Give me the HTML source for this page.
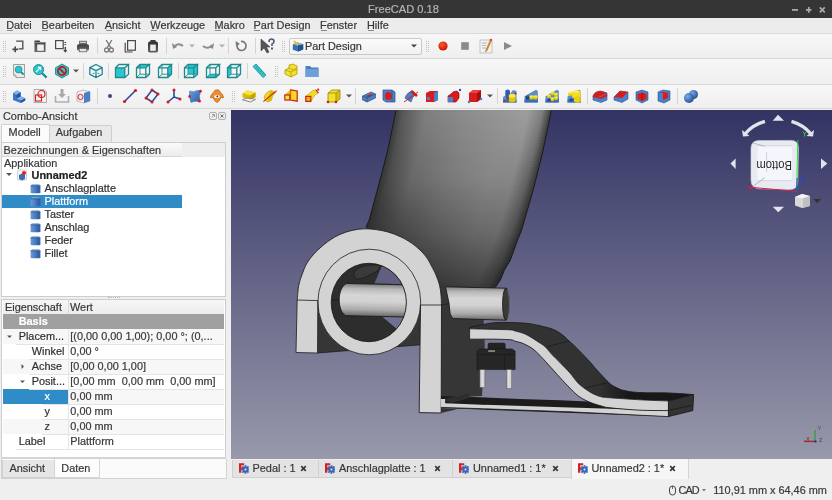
<!DOCTYPE html><html><head><meta charset="utf-8"><title>FreeCAD</title><style>
html,body{margin:0;padding:0}
body{width:832px;height:500px;overflow:hidden;position:relative;background:#efefef;
font-family:"Liberation Sans",sans-serif;font-size:10.90px;color:#383838}
.t{position:absolute;line-height:12px;white-space:pre}
svg{display:block}
.t{-webkit-font-smoothing:antialiased;transform:translateZ(0);-webkit-text-stroke:0.2px currentColor}
</style></head><body><div style="position:absolute;left:0;top:0;width:832px;height:18px;background:#353535"></div>
<div class="t" style="left:368.00px;top:2.72px;color:#b4b4b4;font-size:11.1px">FreeCAD 0.18</div>
<svg style="position:absolute;left:780px;top:0" width="52" height="18"><rect x="12" y="9" width="6" height="1.8" fill="#a8a8a8"/><rect x="26" y="9" width="5.5" height="1.8" fill="#a8a8a8"/><rect x="27.9" y="7" width="1.8" height="5.8" fill="#a8a8a8"/><path d="M39.8 7.3 L44.8 12.3 M44.8 7.3 L39.8 12.3" stroke="#a8a8a8" stroke-width="1.7"/></svg>
<div style="position:absolute;left:0;top:18px;width:832px;height:15px;background:#ececec;border-bottom:1px solid #d9d9d9"></div>
<div class="t" style="left:6.20px;top:19.22px;color:#383838">Datei</div>
<div style="position:absolute;left:7.0px;top:30.2px;width:6px;height:1px;background:#8a8a8a"></div>
<div class="t" style="left:41.60px;top:19.22px;color:#383838">Bearbeiten</div>
<div style="position:absolute;left:42.4px;top:30.2px;width:6px;height:1px;background:#8a8a8a"></div>
<div class="t" style="left:104.80px;top:19.22px;color:#383838">Ansicht</div>
<div style="position:absolute;left:105.6px;top:30.2px;width:6px;height:1px;background:#8a8a8a"></div>
<div class="t" style="left:150.30px;top:19.22px;color:#383838">Werkzeuge</div>
<div style="position:absolute;left:151.1px;top:30.2px;width:6px;height:1px;background:#8a8a8a"></div>
<div class="t" style="left:214.50px;top:19.22px;color:#383838">Makro</div>
<div style="position:absolute;left:215.3px;top:30.2px;width:6px;height:1px;background:#8a8a8a"></div>
<div class="t" style="left:253.60px;top:19.22px;color:#383838">Part Design</div>
<div style="position:absolute;left:254.4px;top:30.2px;width:6px;height:1px;background:#8a8a8a"></div>
<div class="t" style="left:320.10px;top:19.22px;color:#383838">Fenster</div>
<div style="position:absolute;left:320.9px;top:30.2px;width:6px;height:1px;background:#8a8a8a"></div>
<div class="t" style="left:367.00px;top:19.22px;color:#383838">Hilfe</div>
<div style="position:absolute;left:367.8px;top:30.2px;width:6px;height:1px;background:#8a8a8a"></div>
<div style="position:absolute;left:0;top:34px;width:832px;height:24px;background:linear-gradient(#f7f7f7,#efefef);border-bottom:1px solid #d6d6d6"></div>
<div style="position:absolute;left:0;top:59px;width:832px;height:25px;background:linear-gradient(#f7f7f7,#efefef);border-bottom:1px solid #d6d6d6"></div>
<div style="position:absolute;left:0;top:85px;width:832px;height:23px;background:linear-gradient(#f7f7f7,#efefef);border-bottom:1px solid #d6d6d6"></div>
<svg style="position:absolute;left:3px;top:38px" width="5" height="16"><rect x="0" y="3" width="1" height="1" fill="#c2c2c2"/><rect x="2" y="3" width="1" height="1" fill="#c2c2c2"/><rect x="0" y="5" width="1" height="1" fill="#c2c2c2"/><rect x="2" y="5" width="1" height="1" fill="#c2c2c2"/><rect x="0" y="7" width="1" height="1" fill="#c2c2c2"/><rect x="2" y="7" width="1" height="1" fill="#c2c2c2"/><rect x="0" y="9" width="1" height="1" fill="#c2c2c2"/><rect x="2" y="9" width="1" height="1" fill="#c2c2c2"/><rect x="0" y="11" width="1" height="1" fill="#c2c2c2"/><rect x="2" y="11" width="1" height="1" fill="#c2c2c2"/><rect x="0" y="13" width="1" height="1" fill="#c2c2c2"/><rect x="2" y="13" width="1" height="1" fill="#c2c2c2"/></svg>
<svg style="position:absolute;left:10.0px;top:38.0px" width="16" height="16" viewBox="0 0 16 16"><path d="M6.2 3.2 H12.8 V10.8 H8.6" fill="none" stroke="#4a4a4a" stroke-width="1.3"/><path d="M5.2 8.6 V14.2 M2.4 11.4 H8" stroke="#4a4a4a" stroke-width="1.6"/></svg>
<svg style="position:absolute;left:32.0px;top:38.0px" width="16" height="16" viewBox="0 0 16 16"><defs><linearGradient id="opg" x1="0" y1="0" x2="0" y2="1"><stop offset="0" stop-color="#404040"/><stop offset="1" stop-color="#6a6a6a"/></linearGradient></defs><path d="M2.5 2.5 H7.5 L8.5 4 H13.5 V14 H2.5 Z" fill="url(#opg)"/><rect x="2.5" y="4" width="11" height="1" fill="#888"/><rect x="5.2" y="6.5" width="6.6" height="6.3" fill="#f0f0f0"/></svg>
<svg style="position:absolute;left:53.3px;top:38.0px" width="16" height="16" viewBox="0 0 16 16"><rect x="2.6" y="2.6" width="7.6" height="8" fill="none" stroke="#4a4a4a" stroke-width="1.2"/><path d="M12.3 9 V13.5" stroke="#4a4a4a" stroke-width="1.5"/><path d="M10.2 12 L12.3 14.8 L14.4 12 Z" fill="#4a4a4a"/><rect x="11.4" y="4" width="1.8" height="1" fill="#4a4a4a"/><rect x="11.4" y="6.2" width="1.8" height="1" fill="#4a4a4a"/></svg>
<svg style="position:absolute;left:75.2px;top:38.0px" width="16" height="16" viewBox="0 0 16 16"><defs><linearGradient id="prg" x1="0" y1="0" x2="0" y2="1"><stop offset="0" stop-color="#3c3c3c"/><stop offset="1" stop-color="#6a6a6a"/></linearGradient></defs><rect x="4.2" y="2.8" width="7.6" height="4" fill="#555"/><rect x="5" y="3.6" width="6" height="1.6" fill="#ccc"/><rect x="2" y="6.2" width="12" height="6.4" rx="1.6" fill="url(#prg)"/><rect x="4.2" y="10.4" width="7.6" height="3.4" fill="#e4e4e4" stroke="#555" stroke-width="0.7"/></svg>
<div style="position:absolute;left:96.5px;top:38px;width:1px;height:16px;background:#d4d4d4"></div>
<svg style="position:absolute;left:101.0px;top:38.0px" width="16" height="16" viewBox="0 0 16 16"><path d="M5.2 2 L10 10.2 M10.8 2 L6 10.2" stroke="#7c7c7c" stroke-width="1.4"/><circle cx="5.6" cy="12" r="2" fill="none" stroke="#7c7c7c" stroke-width="1.3"/><circle cx="10.4" cy="12" r="2" fill="none" stroke="#7c7c7c" stroke-width="1.3"/></svg>
<svg style="position:absolute;left:122.0px;top:38.0px" width="16" height="16" viewBox="0 0 16 16"><rect x="5.6" y="2.6" width="7.8" height="9.6" fill="#f2f2f2" stroke="#4a4a4a" stroke-width="1.2"/><path d="M3.2 4.8 V14 H10.6" fill="none" stroke="#4a4a4a" stroke-width="1.2"/></svg>
<svg style="position:absolute;left:144.5px;top:38.0px" width="16" height="16" viewBox="0 0 16 16"><defs><linearGradient id="psg" x1="0" y1="0" x2="0" y2="1"><stop offset="0" stop-color="#303030"/><stop offset="1" stop-color="#606060"/></linearGradient></defs><rect x="3" y="3.6" width="10" height="11" rx="1.8" fill="url(#psg)"/><rect x="5.4" y="2" width="5.2" height="2.6" rx="0.6" fill="#3a3a3a"/><rect x="5.2" y="6.6" width="5.6" height="6.2" fill="#ececec"/></svg>
<div style="position:absolute;left:165.8px;top:38px;width:1px;height:16px;background:#d4d4d4"></div>
<svg style="position:absolute;left:169.7px;top:38.0px" width="16" height="16" viewBox="0 0 16 16"><path d="M4 9 Q8 4 13 8" fill="none" stroke="#8c8c8c" stroke-width="2"/><path d="M2 5 L3 11 L7 9 Z" fill="#8c8c8c"/></svg>
<svg style="position:absolute;left:188.0px;top:42.0px" width="8" height="8" viewBox="0 0 8 8"><path d="M1 2.5 L7 2.5 L4 5.5 Z" fill="#b0b0b0"/></svg>
<svg style="position:absolute;left:199.5px;top:38.0px" width="16" height="16" viewBox="0 0 16 16"><path d="M3 8 Q8 12 12 7" fill="none" stroke="#8c8c8c" stroke-width="2"/><path d="M14 5 L13 11 L9 9 Z" fill="#8c8c8c"/></svg>
<svg style="position:absolute;left:218.0px;top:42.0px" width="8" height="8" viewBox="0 0 8 8"><path d="M1 2.5 L7 2.5 L4 5.5 Z" fill="#b0b0b0"/></svg>
<div style="position:absolute;left:228.0px;top:38px;width:1px;height:16px;background:#d4d4d4"></div>
<svg style="position:absolute;left:233.3px;top:38.0px" width="16" height="16" viewBox="0 0 16 16"><path d="M4.5 6 A4.5 4.5 0 1 0 8 3.5" fill="none" stroke="#7a7a7a" stroke-width="1.7"/><path d="M2.5 3 L3 8 L7 6 Z" fill="#7a7a7a"/></svg>
<div style="position:absolute;left:254.5px;top:38px;width:1px;height:16px;background:#d4d4d4"></div>
<svg style="position:absolute;left:259.0px;top:38.0px" width="17" height="16" viewBox="0 0 17 16"><path d="M2 1 L2 13 L5 10 L8 15 L10 14 L7.5 9 L11 9 Z" fill="#555" stroke="#444" stroke-width="0.6"/><path d="M10 4 Q10 1 12.5 1 Q15 1 15 3.5 Q15 5 13 6 V8" fill="none" stroke="#4a5a7a" stroke-width="1.6"/><rect x="12" y="9.5" width="2" height="2" fill="#4a5a7a"/></svg>
<svg style="position:absolute;left:282px;top:38px" width="5" height="16"><rect x="0" y="3" width="1" height="1" fill="#c2c2c2"/><rect x="2" y="3" width="1" height="1" fill="#c2c2c2"/><rect x="0" y="5" width="1" height="1" fill="#c2c2c2"/><rect x="2" y="5" width="1" height="1" fill="#c2c2c2"/><rect x="0" y="7" width="1" height="1" fill="#c2c2c2"/><rect x="2" y="7" width="1" height="1" fill="#c2c2c2"/><rect x="0" y="9" width="1" height="1" fill="#c2c2c2"/><rect x="2" y="9" width="1" height="1" fill="#c2c2c2"/><rect x="0" y="11" width="1" height="1" fill="#c2c2c2"/><rect x="2" y="11" width="1" height="1" fill="#c2c2c2"/><rect x="0" y="13" width="1" height="1" fill="#c2c2c2"/><rect x="2" y="13" width="1" height="1" fill="#c2c2c2"/></svg>
<div style="position:absolute;left:289px;top:37.5px;width:131px;height:15.5px;border:1px solid #c9c9c9;border-radius:2px;background:linear-gradient(#fbfbfb,#f1f1f1)"></div>
<svg style="position:absolute;left:291.8px;top:40.0px" width="12" height="12" viewBox="0 0 12 12"><path d="M0.8 4.2 L5.6 2.6 L11.2 4.2 V9.6 L6 11.4 L0.8 9.8 Z" fill="#3a6fb5"/><path d="M0.8 4.2 L6 5.8 L11.2 4.2 L5.6 2.6 Z" fill="#8ab0e0"/><path d="M6 5.8 L11.2 4.2 V9.6 L6 11.4 Z" fill="#24508f"/><path d="M1.8 0.8 L6.4 5.2" stroke="#e8c020" stroke-width="1.8"/><path d="M6.4 5.2 L7 5.8" stroke="#444" stroke-width="1.2"/></svg>
<div class="t" style="left:305.00px;top:39.62px;color:#383838">Part Design</div>
<svg style="position:absolute;left:409.5px;top:42.0px" width="8" height="8" viewBox="0 0 8 8"><path d="M1 2.5 L7 2.5 L4 5.5 Z" fill="#444"/></svg>
<svg style="position:absolute;left:426px;top:38px" width="5" height="16"><rect x="0" y="3" width="1" height="1" fill="#c2c2c2"/><rect x="2" y="3" width="1" height="1" fill="#c2c2c2"/><rect x="0" y="5" width="1" height="1" fill="#c2c2c2"/><rect x="2" y="5" width="1" height="1" fill="#c2c2c2"/><rect x="0" y="7" width="1" height="1" fill="#c2c2c2"/><rect x="2" y="7" width="1" height="1" fill="#c2c2c2"/><rect x="0" y="9" width="1" height="1" fill="#c2c2c2"/><rect x="2" y="9" width="1" height="1" fill="#c2c2c2"/><rect x="0" y="11" width="1" height="1" fill="#c2c2c2"/><rect x="2" y="11" width="1" height="1" fill="#c2c2c2"/><rect x="0" y="13" width="1" height="1" fill="#c2c2c2"/><rect x="2" y="13" width="1" height="1" fill="#c2c2c2"/></svg>
<svg style="position:absolute;left:435.0px;top:38.0px" width="16" height="16" viewBox="0 0 16 16"><defs><radialGradient id="rg1" cx="0.4" cy="0.35" r="0.7"><stop offset="0" stop-color="#ff5a30"/><stop offset="1" stop-color="#c01000"/></radialGradient></defs><circle cx="8" cy="8" r="4.6" fill="url(#rg1)"/></svg>
<svg style="position:absolute;left:456.5px;top:38.0px" width="16" height="16" viewBox="0 0 16 16"><rect x="4.2" y="4.2" width="7.6" height="7.6" fill="#8a8a8a"/></svg>
<svg style="position:absolute;left:478.0px;top:38.0px" width="16" height="16" viewBox="0 0 16 16"><rect x="2" y="2" width="12" height="13" fill="#f2f2f2" stroke="#b8b8b8" stroke-width="0.8"/><path d="M4 5 H9 M4 7.5 H8 M4 10 H8" stroke="#9aa" stroke-width="0.8"/><path d="M12.5 1.5 L8 12 L7.5 14 L9 12.5 L13.5 2.5 Z" fill="#f0a020" stroke="#b06000" stroke-width="0.6"/><circle cx="13" cy="1.8" r="1.1" fill="#e03030"/></svg>
<svg style="position:absolute;left:499.5px;top:38.0px" width="16" height="16" viewBox="0 0 16 16"><path d="M4 4 L12 8 L4 12 Z" fill="#8a8a8a"/></svg>
<svg style="position:absolute;left:3px;top:63px" width="5" height="16"><rect x="0" y="3" width="1" height="1" fill="#c2c2c2"/><rect x="2" y="3" width="1" height="1" fill="#c2c2c2"/><rect x="0" y="5" width="1" height="1" fill="#c2c2c2"/><rect x="2" y="5" width="1" height="1" fill="#c2c2c2"/><rect x="0" y="7" width="1" height="1" fill="#c2c2c2"/><rect x="2" y="7" width="1" height="1" fill="#c2c2c2"/><rect x="0" y="9" width="1" height="1" fill="#c2c2c2"/><rect x="2" y="9" width="1" height="1" fill="#c2c2c2"/><rect x="0" y="11" width="1" height="1" fill="#c2c2c2"/><rect x="2" y="11" width="1" height="1" fill="#c2c2c2"/><rect x="0" y="13" width="1" height="1" fill="#c2c2c2"/><rect x="2" y="13" width="1" height="1" fill="#c2c2c2"/></svg>
<svg style="position:absolute;left:10.7px;top:63.3px" width="16" height="16" viewBox="0 0 16 16"><path d="M2.5 1.5 H13.5 V14.5 H5 L2.5 12 Z" fill="#ececec" stroke="#8a8a8a" stroke-width="0.8"/><path d="M2.5 12 H5 V14.5" fill="#d0d0d0" stroke="#8a8a8a" stroke-width="0.6"/><circle cx="7.6" cy="6.6" r="3.4" fill="#2cc6cf" stroke="#1d8a90" stroke-width="0.8"/><path d="M10 9 L12.6 11.6" stroke="#1d8a90" stroke-width="1.8"/></svg>
<svg style="position:absolute;left:32.0px;top:63.3px" width="16" height="16" viewBox="0 0 16 16"><circle cx="6.6" cy="6.6" r="5" fill="#2cc6cf" stroke="#1d8a90" stroke-width="1"/><path d="M10.2 10.2 L14.6 14.6" stroke="#1d8a90" stroke-width="2.2"/><path d="M4 9 L8.6 4.4 M6 4.4 H8.6 V7" stroke="#fff" stroke-width="1.1" fill="none"/></svg>
<svg style="position:absolute;left:53.5px;top:63.3px" width="16" height="16" viewBox="0 0 16 16"><path d="M8 1 L14.5 4.7 V11.3 L8 15 L1.5 11.3 V4.7 Z" fill="#2cc6cf" stroke="#1d8a90" stroke-width="0.9"/><circle cx="8" cy="8" r="4.1" fill="none" stroke="#c01818" stroke-width="1.7"/><path d="M5.2 5.2 L10.8 10.8" stroke="#c01818" stroke-width="1.7"/></svg>
<svg style="position:absolute;left:72.0px;top:67.3px" width="8" height="8" viewBox="0 0 8 8"><path d="M1 2.5 L7 2.5 L4 5.5 Z" fill="#555"/></svg>
<div style="position:absolute;left:82.5px;top:63.3px;width:1px;height:16px;background:#d4d4d4"></div>
<svg style="position:absolute;left:87.5px;top:63.3px" width="16" height="16" viewBox="0 0 16 16"><path d="M8 1.5 L14.2 4.6 V11.4 L8 14.5 L1.8 11.4 V4.6 Z" fill="#f6f6f6"/><path d="M8 1.5 L14.2 4.6 V11.4 L8 14.5 L1.8 11.4 V4.6 Z M1.8 4.6 L8 7.7 L14.2 4.6 M8 7.7 V14.5" fill="none" stroke="#1d8a90" stroke-width="1.3"/><path d="M4.5 11 L6.5 10 M11.5 11 L9.5 10" stroke="#1d8a90" stroke-width="0.9"/></svg>
<div style="position:absolute;left:108.0px;top:63.3px;width:1px;height:16px;background:#d4d4d4"></div>
<svg style="position:absolute;left:113.5px;top:63.3px" width="16" height="16" viewBox="0 0 16 16"><path d="M1.5 4.8 H10.8 V14.5 H1.5 Z M1.5 4.8 L5 1.5 H14.5 L10.8 4.8 Z M10.8 4.8 L14.5 1.5 V11.2 L10.8 14.5 Z" fill="#f6f6f6"/><path d="M1.5 4.8 H10.8 V14.5 H1.5 Z" fill="#2cc6cf"/><path d="M1.5 4.8 H10.8 V14.5 H1.5 Z M1.5 4.8 L5 1.5 H14.5 L10.8 4.8 M14.5 1.5 V11.2 L10.8 14.5" fill="none" stroke="#1d8a90" stroke-width="1.3"/></svg>
<svg style="position:absolute;left:135.0px;top:63.3px" width="16" height="16" viewBox="0 0 16 16"><path d="M1.5 4.8 H10.8 V14.5 H1.5 Z M1.5 4.8 L5 1.5 H14.5 L10.8 4.8 Z M10.8 4.8 L14.5 1.5 V11.2 L10.8 14.5 Z" fill="#f6f6f6"/><path d="M1.5 4.8 L5 1.5 H14.5 L10.8 4.8 Z" fill="#2cc6cf"/><path d="M5 1.5 V11.2 H14.5 M5 11.2 L1.5 14.5" fill="none" stroke="#1d8a90" stroke-width="0.9"/><path d="M1.5 4.8 H10.8 V14.5 H1.5 Z M1.5 4.8 L5 1.5 H14.5 L10.8 4.8 M14.5 1.5 V11.2 L10.8 14.5" fill="none" stroke="#1d8a90" stroke-width="1.3"/></svg>
<svg style="position:absolute;left:156.5px;top:63.3px" width="16" height="16" viewBox="0 0 16 16"><path d="M1.5 4.8 H10.8 V14.5 H1.5 Z M1.5 4.8 L5 1.5 H14.5 L10.8 4.8 Z M10.8 4.8 L14.5 1.5 V11.2 L10.8 14.5 Z" fill="#f6f6f6"/><path d="M10.8 4.8 L14.5 1.5 V11.2 L10.8 14.5 Z" fill="#2cc6cf"/><path d="M5 1.5 V11.2 H14.5 M5 11.2 L1.5 14.5" fill="none" stroke="#1d8a90" stroke-width="0.9"/><path d="M1.5 4.8 H10.8 V14.5 H1.5 Z M1.5 4.8 L5 1.5 H14.5 L10.8 4.8 M14.5 1.5 V11.2 L10.8 14.5" fill="none" stroke="#1d8a90" stroke-width="1.3"/></svg>
<div style="position:absolute;left:177.7px;top:63.3px;width:1px;height:16px;background:#d4d4d4"></div>
<svg style="position:absolute;left:182.7px;top:63.3px" width="16" height="16" viewBox="0 0 16 16"><path d="M1.5 4.8 H10.8 V14.5 H1.5 Z M1.5 4.8 L5 1.5 H14.5 L10.8 4.8 Z M10.8 4.8 L14.5 1.5 V11.2 L10.8 14.5 Z" fill="#f6f6f6"/><path d="M5 1.5 H14.5 V11.2 H5 Z" fill="#2cc6cf"/><path d="M5 1.5 V11.2 H14.5 M5 11.2 L1.5 14.5" fill="none" stroke="#1d8a90" stroke-width="0.9"/><path d="M1.5 4.8 H10.8 V14.5 H1.5 Z M1.5 4.8 L5 1.5 H14.5 L10.8 4.8 M14.5 1.5 V11.2 L10.8 14.5" fill="none" stroke="#1d8a90" stroke-width="1.3"/></svg>
<svg style="position:absolute;left:204.5px;top:63.3px" width="16" height="16" viewBox="0 0 16 16"><path d="M1.5 4.8 H10.8 V14.5 H1.5 Z M1.5 4.8 L5 1.5 H14.5 L10.8 4.8 Z M10.8 4.8 L14.5 1.5 V11.2 L10.8 14.5 Z" fill="#f6f6f6"/><path d="M1.5 14.5 L5 11.2 H14.5 L10.8 14.5 Z" fill="#2cc6cf"/><path d="M5 1.5 V11.2 H14.5 M5 11.2 L1.5 14.5" fill="none" stroke="#1d8a90" stroke-width="0.9"/><path d="M1.5 4.8 H10.8 V14.5 H1.5 Z M1.5 4.8 L5 1.5 H14.5 L10.8 4.8 M14.5 1.5 V11.2 L10.8 14.5" fill="none" stroke="#1d8a90" stroke-width="1.3"/></svg>
<svg style="position:absolute;left:225.5px;top:63.3px" width="16" height="16" viewBox="0 0 16 16"><path d="M1.5 4.8 H10.8 V14.5 H1.5 Z M1.5 4.8 L5 1.5 H14.5 L10.8 4.8 Z M10.8 4.8 L14.5 1.5 V11.2 L10.8 14.5 Z" fill="#f6f6f6"/><path d="M1.5 4.8 L5 1.5 V11.2 L1.5 14.5 Z" fill="#2cc6cf"/><path d="M5 1.5 V11.2 H14.5 M5 11.2 L1.5 14.5" fill="none" stroke="#1d8a90" stroke-width="0.9"/><path d="M1.5 4.8 H10.8 V14.5 H1.5 Z M1.5 4.8 L5 1.5 H14.5 L10.8 4.8 M14.5 1.5 V11.2 L10.8 14.5" fill="none" stroke="#1d8a90" stroke-width="1.3"/></svg>
<div style="position:absolute;left:247.0px;top:63.3px;width:1px;height:16px;background:#d4d4d4"></div>
<svg style="position:absolute;left:250.8px;top:63.3px" width="16" height="16" viewBox="0 0 16 16"><path d="M2 3.5 L5 1 L15 12 L12 14.5 Z" fill="#2cc6cf" stroke="#1d8a90" stroke-width="0.8"/><path d="M5 5 L6.5 4 M7 7 L8.5 6 M9 9 L10.5 8 M11 11 L12.5 10" stroke="#1d8a90" stroke-width="0.8"/></svg>
<svg style="position:absolute;left:275px;top:63px" width="5" height="16"><rect x="0" y="3" width="1" height="1" fill="#c2c2c2"/><rect x="2" y="3" width="1" height="1" fill="#c2c2c2"/><rect x="0" y="5" width="1" height="1" fill="#c2c2c2"/><rect x="2" y="5" width="1" height="1" fill="#c2c2c2"/><rect x="0" y="7" width="1" height="1" fill="#c2c2c2"/><rect x="2" y="7" width="1" height="1" fill="#c2c2c2"/><rect x="0" y="9" width="1" height="1" fill="#c2c2c2"/><rect x="2" y="9" width="1" height="1" fill="#c2c2c2"/><rect x="0" y="11" width="1" height="1" fill="#c2c2c2"/><rect x="2" y="11" width="1" height="1" fill="#c2c2c2"/><rect x="0" y="13" width="1" height="1" fill="#c2c2c2"/><rect x="2" y="13" width="1" height="1" fill="#c2c2c2"/></svg>
<svg style="position:absolute;left:283.3px;top:63.3px" width="16" height="16" viewBox="0 0 16 16"><path d="M2 7 L6 5 V2 L10 1 L14 3 V11 L8 14 L2 11 Z" fill="#f0e030" stroke="#b09a00" stroke-width="0.8"/><path d="M2 7 L8 9 L14 6 M8 9 V14 M6 5 L10 7 L14 5" fill="none" stroke="#b09a00" stroke-width="0.7"/></svg>
<svg style="position:absolute;left:304.3px;top:63.3px" width="16" height="16" viewBox="0 0 16 16"><path d="M1.5 3 H6 L7.5 4.5 H14.5 V14 H1.5 Z" fill="#4a7fc0"/><path d="M1.5 6 H14.5 V14 H1.5 Z" fill="#6e9fd8"/></svg>
<svg style="position:absolute;left:3px;top:88px" width="5" height="16"><rect x="0" y="3" width="1" height="1" fill="#c2c2c2"/><rect x="2" y="3" width="1" height="1" fill="#c2c2c2"/><rect x="0" y="5" width="1" height="1" fill="#c2c2c2"/><rect x="2" y="5" width="1" height="1" fill="#c2c2c2"/><rect x="0" y="7" width="1" height="1" fill="#c2c2c2"/><rect x="2" y="7" width="1" height="1" fill="#c2c2c2"/><rect x="0" y="9" width="1" height="1" fill="#c2c2c2"/><rect x="2" y="9" width="1" height="1" fill="#c2c2c2"/><rect x="0" y="11" width="1" height="1" fill="#c2c2c2"/><rect x="2" y="11" width="1" height="1" fill="#c2c2c2"/><rect x="0" y="13" width="1" height="1" fill="#c2c2c2"/><rect x="2" y="13" width="1" height="1" fill="#c2c2c2"/></svg>
<svg style="position:absolute;left:10.8px;top:88.3px" width="16" height="16" viewBox="0 0 16 16"><path d="M2 5 L6 2.6 L9.6 4.3 V8.2 L14.2 10.2 V12.6 L9.8 15 L2 12 Z" fill="#3d74c4"/><path d="M2 5 L6 2.6 L9.6 4.3 L5.6 6.7 Z M5.6 10.5 L9.6 8.2 L14.2 10.2 L10.2 12.4 Z" fill="#86b0e6"/><path d="M5.6 6.7 L9.6 4.3 V8.2 L5.6 10.5 Z M10.2 12.4 L14.2 10.2 V12.6 L9.8 15 Z" fill="#24549c"/></svg>
<svg style="position:absolute;left:32.2px;top:88.3px" width="16" height="16" viewBox="0 0 16 16"><path d="M2 1.5 H12 L14.5 4 V14.5 H2 Z" fill="#f2f2f2" stroke="#999" stroke-width="0.8"/><circle cx="9.5" cy="6" r="3.5" fill="none" stroke="#d81c1c" stroke-width="1.1"/><rect x="3.5" y="7" width="6" height="6" fill="none" stroke="#d81c1c" stroke-width="1.1"/></svg>
<svg style="position:absolute;left:53.5px;top:88.3px" width="16" height="16" viewBox="0 0 16 16"><path d="M6.5 1 H9.5 V6 H12 L8 10 L4 6 H6.5 Z" fill="#a8a8a8"/><path d="M1.5 8 V14 H14.5 V8" fill="none" stroke="#b0b0b0" stroke-width="1.6"/></svg>
<svg style="position:absolute;left:75.2px;top:88.3px" width="16" height="16" viewBox="0 0 16 16"><path d="M2 4 L8 2 L15 4 V13 L9 15 L2 13 Z" fill="#f2f2f2" stroke="#999" stroke-width="0.6"/><path d="M9 5 L15 3 V13 L9 15 Z" fill="#4a80c8"/><circle cx="5.5" cy="9" r="2.6" fill="none" stroke="#d81c1c" stroke-width="1"/></svg>
<div style="position:absolute;left:96.5px;top:88.3px;width:1px;height:16px;background:#d4d4d4"></div>
<svg style="position:absolute;left:102.0px;top:88.3px" width="16" height="16" viewBox="0 0 16 16"><circle cx="8" cy="8" r="2" fill="#2a4a9a"/><circle cx="8" cy="8" r="1" fill="#c02020"/></svg>
<svg style="position:absolute;left:122.0px;top:88.3px" width="16" height="16" viewBox="0 0 16 16"><path d="M2.5 13.5 L13.5 2.5" stroke="#2a4a9a" stroke-width="1.6"/><circle cx="2.5" cy="13.5" r="1.6" fill="#d81c1c"/><circle cx="13.5" cy="2.5" r="1.6" fill="#d81c1c"/></svg>
<svg style="position:absolute;left:144.0px;top:88.3px" width="16" height="16" viewBox="0 0 16 16"><path d="M8 2 L14 6 L8 14 L2 10 Z" fill="none" stroke="#2a4a9a" stroke-width="1.6"/><circle cx="8" cy="2" r="1.5" fill="#d81c1c"/><circle cx="14" cy="6" r="1.5" fill="#d81c1c"/><circle cx="8" cy="14" r="1.5" fill="#d81c1c"/><circle cx="2" cy="10" r="1.5" fill="#d81c1c"/></svg>
<svg style="position:absolute;left:165.5px;top:88.3px" width="16" height="16" viewBox="0 0 16 16"><path d="M8 2 V9 L2 14 M8 9 L14 11" fill="none" stroke="#2a4a9a" stroke-width="1.6"/><circle cx="8" cy="2" r="1.5" fill="#d81c1c"/><circle cx="2" cy="14" r="1.5" fill="#d81c1c"/><circle cx="14" cy="11" r="1.5" fill="#d81c1c"/></svg>
<svg style="position:absolute;left:187.0px;top:88.3px" width="16" height="16" viewBox="0 0 16 16"><defs><linearGradient id="bsg" x1="0" y1="0" x2="1" y2="1"><stop offset="0" stop-color="#6aa0e0"/><stop offset="1" stop-color="#2a5ea8"/></linearGradient></defs><path d="M2.6 3 Q7 4.6 10.2 2.4 L13.8 3 Q11.6 8 13 12.8 L12.4 13.6 Q8 12.6 4 14.4 Q1.8 9 2.6 3 Z" fill="url(#bsg)" stroke="#3a64a8" stroke-width="0.5"/><circle cx="13.4" cy="3.2" r="1.4" fill="#d81c1c"/><circle cx="2.6" cy="8.4" r="1.3" fill="#d81c1c"/><circle cx="12.4" cy="13.2" r="1.4" fill="#d81c1c"/></svg>
<svg style="position:absolute;left:208.5px;top:88.3px" width="16" height="16" viewBox="0 0 16 16"><path d="M6 2.2 Q8 1.4 10 2.2 L11.4 4.2 Q14 6.2 14.6 9.6 Q13.6 10.6 12 9.2 Q11 13.2 8 14.6 Q5 13.2 4 9.2 Q2.4 10.6 1.4 9.6 Q2 6.2 4.6 4.2 Z" fill="#f08c2a" stroke="#a85010" stroke-width="0.6"/><ellipse cx="8" cy="8.4" rx="2.9" ry="1.5" fill="#fafafa"/><circle cx="8.3" cy="8.4" r="0.9" fill="#333"/></svg>
<svg style="position:absolute;left:232px;top:88px" width="5" height="16"><rect x="0" y="3" width="1" height="1" fill="#c2c2c2"/><rect x="2" y="3" width="1" height="1" fill="#c2c2c2"/><rect x="0" y="5" width="1" height="1" fill="#c2c2c2"/><rect x="2" y="5" width="1" height="1" fill="#c2c2c2"/><rect x="0" y="7" width="1" height="1" fill="#c2c2c2"/><rect x="2" y="7" width="1" height="1" fill="#c2c2c2"/><rect x="0" y="9" width="1" height="1" fill="#c2c2c2"/><rect x="2" y="9" width="1" height="1" fill="#c2c2c2"/><rect x="0" y="11" width="1" height="1" fill="#c2c2c2"/><rect x="2" y="11" width="1" height="1" fill="#c2c2c2"/><rect x="0" y="13" width="1" height="1" fill="#c2c2c2"/><rect x="2" y="13" width="1" height="1" fill="#c2c2c2"/></svg>
<svg style="position:absolute;left:240.5px;top:88.3px" width="16" height="16" viewBox="0 0 16 16"><path d="M1.5 5.2 L6.5 2.6 L14.5 4.6 V9 L9.5 11.6 L1.5 9.6 Z" fill="#d8c000"/><path d="M1.5 5.2 L6.5 2.6 L14.5 4.6 L9.5 7.2 Z" fill="#f6e640"/><path d="M9.5 7.2 L14.5 4.6 V9 L9.5 11.6 Z" fill="#c0a800"/><path d="M1.5 11.8 L6.5 9.6 L14.5 11.4 L9.5 14 Z" fill="none" stroke="#8a8a8a" stroke-width="1"/></svg>
<svg style="position:absolute;left:261.5px;top:88.3px" width="16" height="16" viewBox="0 0 16 16"><path d="M2.2 9.8 Q3 4.2 9.2 2.4 L13.6 4.6 Q9.8 7 9.4 12.4 L5.2 14 Q3 12.4 2.2 9.8 Z" fill="#f0dc20" stroke="#a89000" stroke-width="0.6"/><path d="M9.2 2.4 L13.6 4.6 Q9.8 7 9.4 12.4 L5.2 14 Q5.4 8 9.2 2.4 Z" fill="#d8c000"/><path d="M1.4 13.6 L14.6 2.6" stroke="#d81c1c" stroke-width="1.1"/></svg>
<svg style="position:absolute;left:283.3px;top:88.3px" width="16" height="16" viewBox="0 0 16 16"><path d="M7.5 1.8 L14.2 3 V13.2 L7.5 12 Z" fill="#f0dc20" stroke="#d81c1c" stroke-width="1.2"/><path d="M2 6.4 L7.5 1.8 V12 L2 12.2 Z" fill="#d8c000"/><rect x="1.8" y="7" width="5" height="5" fill="#f6e640" stroke="#d81c1c" stroke-width="1.2"/></svg>
<svg style="position:absolute;left:304.2px;top:88.3px" width="16" height="16" viewBox="0 0 16 16"><path d="M2 8.2 L5.4 5.4 Q8 2 12 1.8 L14.4 5 Q10.6 6 9 10 L6.8 13.6 H2 Z" fill="#f0dc20" stroke="#a89000" stroke-width="0.5"/><rect x="1.8" y="8.4" width="5" height="5" fill="#d8c000" stroke="#d81c1c" stroke-width="1.2"/><path d="M12 1.8 L14.4 5" stroke="#d81c1c" stroke-width="1.2"/><circle cx="14.2" cy="1.6" r="1.1" fill="#d81c1c"/></svg>
<svg style="position:absolute;left:326.3px;top:88.3px" width="16" height="16" viewBox="0 0 16 16"><path d="M2 5 L6 2 H14 V11 L10 14 H2 Z" fill="#f0e030"/><path d="M10 5 L14 2 V11 L10 14 Z" fill="#d8c010"/><path d="M2 5 L6 2 H14 V11 L10 14 H2 Z M2 5 H10 V14 M10 5 L14 2" fill="none" stroke="#a08800" stroke-width="0.8"/><circle cx="2" cy="14" r="1.3" fill="#d81c1c"/><circle cx="10" cy="14" r="1.3" fill="#d81c1c"/></svg>
<svg style="position:absolute;left:344.5px;top:92.3px" width="8" height="8" viewBox="0 0 8 8"><path d="M1 2.5 L7 2.5 L4 5.5 Z" fill="#555"/></svg>
<div style="position:absolute;left:355.4px;top:88.3px;width:1px;height:16px;background:#d4d4d4"></div>
<svg style="position:absolute;left:360.5px;top:88.3px" width="16" height="16" viewBox="0 0 16 16"><path d="M1.5 8 L10 4 L14.5 6 V10 L6 14 L1.5 12 Z" fill="#4a80c8" stroke="#2a5290" stroke-width="0.7"/><path d="M5 8 L10 6 L12 7 L7 9.5 Z" fill="#d81c1c"/><path d="M1.5 8 L6 10 L14.5 6 M6 10 V14" fill="none" stroke="#2a5290" stroke-width="0.7"/></svg>
<svg style="position:absolute;left:381.0px;top:88.3px" width="16" height="16" viewBox="0 0 16 16"><path d="M2 2 L11 2 L14 4 V14 L5 14 L2 12 Z" fill="#4a80c8" stroke="#2a5290" stroke-width="0.7"/><ellipse cx="7.5" cy="8" rx="3.5" ry="4" fill="#d81c1c"/><path d="M11 2 V14" stroke="#2a5290" stroke-width="0.7"/></svg>
<svg style="position:absolute;left:403.0px;top:88.3px" width="16" height="16" viewBox="0 0 16 16"><path d="M2 10 Q4 4 10 3 L13 6 Q9 9 8 14 Z" fill="#4a80c8" stroke="#2a5290" stroke-width="0.7"/><path d="M8 3 L14 8" stroke="#d81c1c" stroke-width="2.5"/><path d="M1 14 L15 4" stroke="#d81c1c" stroke-width="1"/></svg>
<svg style="position:absolute;left:424.3px;top:88.3px" width="16" height="16" viewBox="0 0 16 16"><path d="M2 5 L6 3 H14 V12 L10 14 H2 Z" fill="#d81c1c"/><path d="M10 5 L14 3 V12 L10 14 Z" fill="#4a80c8"/><rect x="3" y="9" width="3" height="3" fill="#4a80c8"/></svg>
<svg style="position:absolute;left:446.0px;top:88.3px" width="16" height="16" viewBox="0 0 16 16"><path d="M2 8 L5 6 Q7 3 11 3 L13 5 V10 L10 14 H2 Z" fill="#d81c1c" stroke="#8a0000" stroke-width="0.6"/><rect x="2" y="9" width="5" height="5" fill="#4a80c8"/><circle cx="14" cy="2" r="1.2" fill="#2a5290"/></svg>
<svg style="position:absolute;left:467.2px;top:88.3px" width="16" height="16" viewBox="0 0 16 16"><path d="M2 5 L6 2 H14 V11 L10 14 H2 Z" fill="#d81c1c"/><path d="M10 5 L14 2 V11 L10 14 Z" fill="#a01010"/><path d="M2 5 L6 2 H14 L10 5 Z" fill="#f04040"/><circle cx="2" cy="14" r="1.3" fill="#4a80c8"/><circle cx="14" cy="11" r="1.3" fill="#4a80c8"/></svg>
<svg style="position:absolute;left:485.7px;top:92.3px" width="8" height="8" viewBox="0 0 8 8"><path d="M1 2.5 L7 2.5 L4 5.5 Z" fill="#555"/></svg>
<div style="position:absolute;left:497.0px;top:88.3px;width:1px;height:16px;background:#d4d4d4"></div>
<svg style="position:absolute;left:501.6px;top:88.3px" width="16" height="16" viewBox="0 0 16 16"><path d="M1 9 L3.5 7.5 V2.5 L6 1.5 L8 3 V6 L11 2 L14.5 3 V14.5 H1 Z" fill="#5a8cd0"/><path d="M3.5 7.5 V2.5 L6 1.5 L8 3 V12 L5 13 Z" fill="#2f5fa8"/><path d="M1 12 H14.5 V14.5 H1 Z" fill="#3a6ab4"/><path d="M6.799999999999999 7.8 V12.3 A3.4 2.04 0 0 0 13.6 12.3 V7.8 Z" fill="#e0c800"/><ellipse cx="10.2" cy="7.8" rx="3.4" ry="2.04" fill="#f8e840"/><circle cx="2.8" cy="12.6" r="1" fill="#d81c1c"/><circle cx="6" cy="10.5" r="0.9" fill="#d81c1c"/><circle cx="13.6" cy="5.5" r="0.9" fill="#d81c1c"/></svg>
<svg style="position:absolute;left:522.7px;top:88.3px" width="16" height="16" viewBox="0 0 16 16"><path d="M1.5 8.5 L4.5 6.5 L13 1.8 L14.8 3 V14.5 H1.5 Z" fill="#5a8cd0"/><path d="M1.5 11.5 L14.8 10 V14.5 H1.5 Z" fill="#3c6cb6"/><path d="M2.7 8.6 V10.4 A1.8 1.08 0 0 0 6.3 10.4 V8.6 Z" fill="#1f3f78"/><ellipse cx="4.5" cy="8.6" rx="1.8" ry="1.08" fill="#2a4f90"/><path d="M6.6 8.4 V10.4 A2.0 1.2 0 0 0 10.6 10.4 V8.4 Z" fill="#e0c800"/><ellipse cx="8.6" cy="8.4" rx="2.0" ry="1.2" fill="#f8e840"/><path d="M10.4 8.4 V10.4 A2.0 1.2 0 0 0 14.4 10.4 V8.4 Z" fill="#e0c800"/><ellipse cx="12.4" cy="8.4" rx="2.0" ry="1.2" fill="#f8e840"/></svg>
<svg style="position:absolute;left:544.3px;top:88.3px" width="16" height="16" viewBox="0 0 16 16"><path d="M1.5 8.5 L4.5 6.5 L13 1.8 L14.8 3 V14.5 H1.5 Z" fill="#5a8cd0"/><path d="M1.5 11.5 L14.8 10 V14.5 H1.5 Z" fill="#3c6cb6"/><path d="M3.2 7.6 V9.2 A1.8 1.08 0 0 0 6.8 9.2 V7.6 Z" fill="#e0c800"/><ellipse cx="5" cy="7.6" rx="1.8" ry="1.08" fill="#f8e840"/><path d="M6.699999999999999 4.6 V6.199999999999999 A1.9 1.14 0 0 0 10.5 6.199999999999999 V4.6 Z" fill="#e0c800"/><ellipse cx="8.6" cy="4.6" rx="1.9" ry="1.14" fill="#f8e840"/><path d="M10.1 5.8 V7.4 A1.9 1.14 0 0 0 13.9 7.4 V5.8 Z" fill="#e0c800"/><ellipse cx="12" cy="5.8" rx="1.9" ry="1.14" fill="#f8e840"/><path d="M10.1 9.4 V11.0 A1.9 1.14 0 0 0 13.9 11.0 V9.4 Z" fill="#e0c800"/><ellipse cx="12" cy="9.4" rx="1.9" ry="1.14" fill="#f8e840"/><path d="M6.299999999999999 10.4 V12.0 A1.9 1.14 0 0 0 10.1 12.0 V10.4 Z" fill="#e0c800"/><ellipse cx="8.2" cy="10.4" rx="1.9" ry="1.14" fill="#f8e840"/><path d="M3.8000000000000003 11.2 V12.399999999999999 A1.4 0.84 0 0 0 6.6 12.399999999999999 V11.2 Z" fill="#1f3f78"/><ellipse cx="5.2" cy="11.2" rx="1.4" ry="0.84" fill="#2a4f90"/></svg>
<svg style="position:absolute;left:566.0px;top:88.3px" width="16" height="16" viewBox="0 0 16 16"><path d="M1.5 8.5 L4.5 6.5 L13 1.8 L14.8 3 V14.5 H1.5 Z" fill="#5a8cd0"/><path d="M1.5 11.5 L14.8 10 V14.5 H1.5 Z" fill="#3c6cb6"/><path d="M2.2 5 V6.8 A2.0 1.2 0 0 0 6.2 6.8 V5 Z" fill="#e0c800"/><ellipse cx="4.2" cy="5" rx="2.0" ry="1.2" fill="#f8e840"/><path d="M6 4 L10 2 L14.8 3.5 V9 L10 11 L6 9 Z" fill="#f0dc20"/><path d="M6 4 L10 2 L14.8 3.5 L10.5 5.5 Z" fill="#faec50"/><path d="M8 9.5 L11.5 8 L14.8 9.5 V13.5 L11.5 15 L8 13.5 Z" fill="#e8d010"/><path d="M3.8000000000000003 11 V12.4 A1.4 0.84 0 0 0 6.6 12.4 V11 Z" fill="#1f3f78"/><ellipse cx="5.2" cy="11" rx="1.4" ry="0.84" fill="#2a4f90"/></svg>
<div style="position:absolute;left:587.0px;top:88.3px;width:1px;height:16px;background:#d4d4d4"></div>
<svg style="position:absolute;left:591.5px;top:88.3px" width="16" height="16" viewBox="0 0 16 16"><path d="M1 8 Q3 3 9 3 L15 5 V12 L9 14.5 L1 12 Z" fill="#4a80c8" stroke="#2a5290" stroke-width="0.6"/><path d="M1 8 Q3 3 9 3 L15 5 L9 8 Z" fill="#d81c1c"/><path d="M1 8 L9 10 L15 7" fill="none" stroke="#d81c1c" stroke-width="2"/></svg>
<svg style="position:absolute;left:613.2px;top:88.3px" width="16" height="16" viewBox="0 0 16 16"><path d="M1 9 L7 3 L15 4 V11 L9 14.5 L1 12 Z" fill="#4a80c8" stroke="#2a5290" stroke-width="0.6"/><path d="M1 9 L7 3 L15 4 L9 10 Z" fill="#d81c1c"/></svg>
<svg style="position:absolute;left:634.3px;top:88.3px" width="16" height="16" viewBox="0 0 16 16"><path d="M2 4 L8 2 L14 4 V12 L8 15 L2 12 Z" fill="#4a80c8" stroke="#2a5290" stroke-width="0.6"/><path d="M3.5 6 L8 4.5 L12.5 6 V11 L8 13 L3.5 11 Z" fill="#d81c1c"/><path d="M8 4.5 V13" stroke="#800" stroke-width="0.6"/></svg>
<svg style="position:absolute;left:656.0px;top:88.3px" width="16" height="16" viewBox="0 0 16 16"><path d="M2 4 L7 2 L14 3 V12 L8 15 L2 13 Z" fill="#4a80c8" stroke="#2a5290" stroke-width="0.6"/><path d="M4 5 L7 4 V12 L12 10 V5 L8 4" fill="#d81c1c"/></svg>
<div style="position:absolute;left:677.0px;top:88.3px;width:1px;height:16px;background:#d4d4d4"></div>
<svg style="position:absolute;left:682.5px;top:88.3px" width="16" height="16" viewBox="0 0 16 16"><defs><radialGradient id="bg1" cx="0.35" cy="0.35" r="0.7"><stop offset="0" stop-color="#7aaaf0"/><stop offset="1" stop-color="#24508f"/></radialGradient></defs><circle cx="10.5" cy="6.5" r="4.5" fill="url(#bg1)"/><circle cx="6" cy="10" r="5" fill="url(#bg1)"/></svg>
<div class="t" style="left:3.00px;top:109.62px;color:#383838">Combo-Ansicht</div>
<svg style="position:absolute;left:208px;top:111px" width="20" height="10"><rect x="1.5" y="1.5" width="7" height="7" rx="1.5" fill="none" stroke="#a8a8a8" stroke-width="0.9"/><rect x="10.5" y="1.5" width="7" height="7" rx="1.5" fill="none" stroke="#a8a8a8" stroke-width="0.9"/><path d="M12.5 3.5 L15.5 6.5 M15.5 3.5 L12.5 6.5" stroke="#666" stroke-width="1"/><path d="M4 3.5 H6.5 V6 M3.5 6.5 L6 4" fill="none" stroke="#888" stroke-width="0.8"/></svg>
<div style="position:absolute;left:48px;top:125px;width:61.5px;height:16px;background:#e9e9e9;border:1px solid #cfcfcf;border-bottom:none;border-radius:2px 2px 0 0"></div>
<div style="position:absolute;left:1px;top:123.5px;width:47px;height:18px;background:#fbfbfb;border:1px solid #cfcfcf;border-bottom:none;border-radius:2px 2px 0 0"></div>
<div class="t" style="left:8.60px;top:126.42px;color:#383838">Modell</div>
<div class="t" style="left:55.80px;top:126.42px;color:#383838">Aufgaben</div>
<div style="position:absolute;left:1px;top:141.5px;width:223px;height:153px;background:#ffffff;border:1px solid #cdcdcd"></div>
<div style="position:absolute;left:2px;top:142.5px;width:223px;height:14px;background:#eeeeee"></div>
<div style="position:absolute;left:2px;top:142.5px;width:180px;height:13px;background:linear-gradient(#fafafa,#ececec);border-bottom:1px solid #d6d6d6"></div>
<div class="t" style="left:3.60px;top:143.82px;color:#383838">Bezeichnungen &amp; Eigenschaften</div>
<div class="t" style="left:4.00px;top:157.42px;color:#383838">Applikation</div>
<div style="position:absolute;left:2px;top:195px;width:180px;height:13px;background:#308cc6"></div>
<svg style="position:absolute;left:5.0px;top:171.3px" width="8" height="8" viewBox="0 0 8 8"><path d="M1 2 L7 2 L4 5 Z" fill="#555"/></svg>
<svg style="position:absolute;left:16.0px;top:169.0px" width="12" height="12" viewBox="0 0 12 12"><rect x="1.5" y="1" width="9" height="10" rx="1" fill="#f4f4f4" stroke="#bbb" stroke-width="0.7"/><path d="M3 6 L6 4.5 L9 6 V10 L6 11.5 L3 10 Z" fill="#3a6fb5"/><circle cx="8" cy="4" r="2" fill="#e02020"/></svg>
<div class="t" style="left:31.60px;top:169.32px;color:#202020;font-weight:bold">Unnamed2</div>
<svg style="position:absolute;left:30.0px;top:182.5px" width="11" height="12" viewBox="0 0 11 12"><defs><linearGradient id="bic" x1="0" y1="0" x2="1" y2="0"><stop offset="0" stop-color="#6a9ad8"/><stop offset="1" stop-color="#2a5aa2"/></linearGradient></defs><path d="M0.6 2.8 L2 1.6 H9 L10.4 2.8 V9.2 L9.4 10.2 H1.6 L0.6 9.2 Z" fill="url(#bic)"/><path d="M0.6 2.8 L2 1.6 H9 L10.4 2.8 Z" fill="#9cbce6"/><path d="M0.6 2.8 H10.4" stroke="#1e4a8a" stroke-width="0.7"/><path d="M7.6 2.8 V10.2" stroke="#2a5296" stroke-width="0.5" opacity="0.6"/></svg>
<div class="t" style="left:44.50px;top:182.32px;color:#303030">Anschlagplatte</div>
<svg style="position:absolute;left:30.0px;top:195.5px" width="11" height="12" viewBox="0 0 11 12"><defs><linearGradient id="bic" x1="0" y1="0" x2="1" y2="0"><stop offset="0" stop-color="#6a9ad8"/><stop offset="1" stop-color="#2a5aa2"/></linearGradient></defs><path d="M0.6 2.8 L2 1.6 H9 L10.4 2.8 V9.2 L9.4 10.2 H1.6 L0.6 9.2 Z" fill="url(#bic)"/><path d="M0.6 2.8 L2 1.6 H9 L10.4 2.8 Z" fill="#9cbce6"/><path d="M0.6 2.8 H10.4" stroke="#1e4a8a" stroke-width="0.7"/><path d="M7.6 2.8 V10.2" stroke="#2a5296" stroke-width="0.5" opacity="0.6"/></svg>
<div class="t" style="left:44.50px;top:195.32px;color:#ffffff">Plattform</div>
<svg style="position:absolute;left:30.0px;top:208.5px" width="11" height="12" viewBox="0 0 11 12"><defs><linearGradient id="bic" x1="0" y1="0" x2="1" y2="0"><stop offset="0" stop-color="#6a9ad8"/><stop offset="1" stop-color="#2a5aa2"/></linearGradient></defs><path d="M0.6 2.8 L2 1.6 H9 L10.4 2.8 V9.2 L9.4 10.2 H1.6 L0.6 9.2 Z" fill="url(#bic)"/><path d="M0.6 2.8 L2 1.6 H9 L10.4 2.8 Z" fill="#9cbce6"/><path d="M0.6 2.8 H10.4" stroke="#1e4a8a" stroke-width="0.7"/><path d="M7.6 2.8 V10.2" stroke="#2a5296" stroke-width="0.5" opacity="0.6"/></svg>
<div class="t" style="left:44.50px;top:208.32px;color:#303030">Taster</div>
<svg style="position:absolute;left:30.0px;top:221.5px" width="11" height="12" viewBox="0 0 11 12"><defs><linearGradient id="bic" x1="0" y1="0" x2="1" y2="0"><stop offset="0" stop-color="#6a9ad8"/><stop offset="1" stop-color="#2a5aa2"/></linearGradient></defs><path d="M0.6 2.8 L2 1.6 H9 L10.4 2.8 V9.2 L9.4 10.2 H1.6 L0.6 9.2 Z" fill="url(#bic)"/><path d="M0.6 2.8 L2 1.6 H9 L10.4 2.8 Z" fill="#9cbce6"/><path d="M0.6 2.8 H10.4" stroke="#1e4a8a" stroke-width="0.7"/><path d="M7.6 2.8 V10.2" stroke="#2a5296" stroke-width="0.5" opacity="0.6"/></svg>
<div class="t" style="left:44.50px;top:221.32px;color:#303030">Anschlag</div>
<svg style="position:absolute;left:30.0px;top:234.5px" width="11" height="12" viewBox="0 0 11 12"><defs><linearGradient id="bic" x1="0" y1="0" x2="1" y2="0"><stop offset="0" stop-color="#6a9ad8"/><stop offset="1" stop-color="#2a5aa2"/></linearGradient></defs><path d="M0.6 2.8 L2 1.6 H9 L10.4 2.8 V9.2 L9.4 10.2 H1.6 L0.6 9.2 Z" fill="url(#bic)"/><path d="M0.6 2.8 L2 1.6 H9 L10.4 2.8 Z" fill="#9cbce6"/><path d="M0.6 2.8 H10.4" stroke="#1e4a8a" stroke-width="0.7"/><path d="M7.6 2.8 V10.2" stroke="#2a5296" stroke-width="0.5" opacity="0.6"/></svg>
<div class="t" style="left:44.50px;top:234.32px;color:#303030">Feder</div>
<svg style="position:absolute;left:30.0px;top:247.5px" width="11" height="12" viewBox="0 0 11 12"><defs><linearGradient id="bic" x1="0" y1="0" x2="1" y2="0"><stop offset="0" stop-color="#6a9ad8"/><stop offset="1" stop-color="#2a5aa2"/></linearGradient></defs><path d="M0.6 2.8 L2 1.6 H9 L10.4 2.8 V9.2 L9.4 10.2 H1.6 L0.6 9.2 Z" fill="url(#bic)"/><path d="M0.6 2.8 L2 1.6 H9 L10.4 2.8 Z" fill="#9cbce6"/><path d="M0.6 2.8 H10.4" stroke="#1e4a8a" stroke-width="0.7"/><path d="M7.6 2.8 V10.2" stroke="#2a5296" stroke-width="0.5" opacity="0.6"/></svg>
<div class="t" style="left:44.50px;top:247.32px;color:#303030">Fillet</div>
<div style="position:absolute;left:108px;top:297px;width:12px;height:1px;border-top:1px dotted #bbb"></div>
<div style="position:absolute;left:1px;top:298.5px;width:223px;height:157.5px;background:#ffffff;border:1px solid #cdcdcd;border-bottom:2px solid #d4d4d4"></div>
<div style="position:absolute;left:3px;top:299.5px;width:221px;height:14px;background:linear-gradient(#f6f6f6,#ececec)"></div>
<div style="position:absolute;left:67.5px;top:300px;width:1px;height:13px;background:#d8d8d8"></div>
<div class="t" style="left:5.00px;top:301.42px;color:#383838">Eigenschaft</div>
<div class="t" style="left:70.00px;top:301.42px;color:#383838">Wert</div>
<div style="position:absolute;left:3px;top:314px;width:221px;height:15px;background:#a0a0a0"></div>
<div class="t" style="left:18.70px;top:314.62px;color:#ffffff;font-weight:bold">Basis</div>
<div style="position:absolute;left:3px;top:329px;width:221px;height:15px;background:#f7f7f7"></div>
<div style="position:absolute;left:67.5px;top:329px;width:1px;height:15px;background:#e6e6e6"></div>
<div class="t" style="left:18.70px;top:329.82px;color:#303030">Placem...</div>
<div class="t" style="left:70.30px;top:329.82px;color:#383838">[(0,00 0,00 1,00); 0,00 °; (0,...</div>
<svg style="position:absolute;left:6.0px;top:333.0px" width="7" height="7" viewBox="0 0 7 7"><path d="M1 2.5 L6 2.5 L3.5 5 Z" fill="#555"/></svg>
<div style="position:absolute;left:3px;top:344px;width:221px;height:15px;background:#ffffff"></div>
<div style="position:absolute;left:67.5px;top:344px;width:1px;height:15px;background:#e6e6e6"></div>
<div class="t" style="left:31.70px;top:344.82px;color:#303030">Winkel</div>
<div class="t" style="left:70.30px;top:344.82px;color:#383838">0,00 °</div>
<div style="position:absolute;left:3px;top:359px;width:221px;height:15px;background:#f7f7f7"></div>
<div style="position:absolute;left:67.5px;top:359px;width:1px;height:15px;background:#e6e6e6"></div>
<div class="t" style="left:31.70px;top:359.82px;color:#303030">Achse</div>
<div class="t" style="left:70.30px;top:359.82px;color:#383838">[0,00 0,00 1,00]</div>
<svg style="position:absolute;left:19.0px;top:363.0px" width="7" height="7" viewBox="0 0 7 7"><path d="M2.5 1 L5 3.5 L2.5 6 Z" fill="#555"/></svg>
<div style="position:absolute;left:3px;top:374px;width:221px;height:15px;background:#ffffff"></div>
<div style="position:absolute;left:67.5px;top:374px;width:1px;height:15px;background:#e6e6e6"></div>
<div class="t" style="left:31.70px;top:374.82px;color:#303030">Posit...</div>
<div class="t" style="left:70.30px;top:374.82px;color:#383838">[0,00 mm  0,00 mm  0,00 mm]</div>
<svg style="position:absolute;left:19.0px;top:378.0px" width="7" height="7" viewBox="0 0 7 7"><path d="M1 2.5 L6 2.5 L3.5 5 Z" fill="#555"/></svg>
<div style="position:absolute;left:3px;top:389px;width:221px;height:15px;background:#f7f7f7"></div>
<div style="position:absolute;left:3px;top:389px;width:64.5px;height:15px;background:#308cc6"></div>
<div style="position:absolute;left:67.5px;top:389px;width:1px;height:15px;background:#e6e6e6"></div>
<div class="t" style="left:44.50px;top:389.82px;color:#ffffff">x</div>
<div class="t" style="left:70.30px;top:389.82px;color:#383838">0,00 mm</div>
<div style="position:absolute;left:3px;top:404px;width:221px;height:15px;background:#ffffff"></div>
<div style="position:absolute;left:67.5px;top:404px;width:1px;height:15px;background:#e6e6e6"></div>
<div class="t" style="left:44.50px;top:404.82px;color:#303030">y</div>
<div class="t" style="left:70.30px;top:404.82px;color:#383838">0,00 mm</div>
<div style="position:absolute;left:3px;top:419px;width:221px;height:15px;background:#f7f7f7"></div>
<div style="position:absolute;left:67.5px;top:419px;width:1px;height:15px;background:#e6e6e6"></div>
<div class="t" style="left:44.50px;top:419.82px;color:#303030">z</div>
<div class="t" style="left:70.30px;top:419.82px;color:#383838">0,00 mm</div>
<div style="position:absolute;left:3px;top:434px;width:221px;height:15px;background:#ffffff"></div>
<div style="position:absolute;left:67.5px;top:434px;width:1px;height:15px;background:#e6e6e6"></div>
<div class="t" style="left:18.70px;top:434.82px;color:#303030">Label</div>
<div class="t" style="left:70.30px;top:434.82px;color:#383838">Plattform</div>
<div style="position:absolute;left:16px;top:343.5px;width:208px;height:1px;background:#e4e4e4"></div>
<div style="position:absolute;left:29px;top:358.5px;width:195px;height:1px;background:#e4e4e4"></div>
<div style="position:absolute;left:29px;top:373.5px;width:195px;height:1px;background:#e4e4e4"></div>
<div style="position:absolute;left:29px;top:388.5px;width:195px;height:1px;background:#e4e4e4"></div>
<div style="position:absolute;left:42px;top:403.5px;width:182px;height:1px;background:#e4e4e4"></div>
<div style="position:absolute;left:42px;top:418.5px;width:182px;height:1px;background:#e4e4e4"></div>
<div style="position:absolute;left:42px;top:433.5px;width:182px;height:1px;background:#e4e4e4"></div>
<div style="position:absolute;left:16px;top:448.5px;width:208px;height:1px;background:#e4e4e4"></div>
<div style="position:absolute;left:1px;top:459px;width:224px;height:18.5px;background:#fbfbfb;border:1px solid #d2d2d2;border-top:none"></div>
<div style="position:absolute;left:1.5px;top:459.5px;width:52px;height:17px;background:#e6e6e6;border:1px solid #cfcfcf;border-top:none"></div>
<div style="position:absolute;left:54px;top:459px;width:44px;height:18px;background:#fcfcfc;border:1px solid #d6d6d6;border-top:none"></div>
<div class="t" style="left:9.40px;top:462.22px;color:#383838">Ansicht</div>
<div class="t" style="left:61.30px;top:462.22px;color:#383838">Daten</div>
<div style="position:absolute;left:231.5px;top:459.5px;width:85.5px;height:17px;background:#e3e3e3;border:1px solid #d0d0d0;border-top:none"></div>
<svg style="position:absolute;left:237.5px;top:462.0px" width="11" height="12" viewBox="0 0 11 12"><path d="M1 1.2 H6.2 V3.2 H3.3 V5.4 H5.6 V7.3 H3.3 V10.8 H1 Z" fill="#d42020"/><rect x="6.6" y="3.2" width="1.8" height="2" fill="#3a64b8" transform="rotate(0 7.5 7.5)"/><rect x="6.6" y="3.2" width="1.8" height="2" fill="#3a64b8" transform="rotate(45 7.5 7.5)"/><rect x="6.6" y="3.2" width="1.8" height="2" fill="#3a64b8" transform="rotate(90 7.5 7.5)"/><rect x="6.6" y="3.2" width="1.8" height="2" fill="#3a64b8" transform="rotate(135 7.5 7.5)"/><rect x="6.6" y="3.2" width="1.8" height="2" fill="#3a64b8" transform="rotate(180 7.5 7.5)"/><rect x="6.6" y="3.2" width="1.8" height="2" fill="#3a64b8" transform="rotate(225 7.5 7.5)"/><rect x="6.6" y="3.2" width="1.8" height="2" fill="#3a64b8" transform="rotate(270 7.5 7.5)"/><rect x="6.6" y="3.2" width="1.8" height="2" fill="#3a64b8" transform="rotate(315 7.5 7.5)"/><circle cx="7.5" cy="7.5" r="2.9" fill="#3a64b8"/><circle cx="7.5" cy="7.5" r="1" fill="#e8e8f0"/></svg>
<div class="t" style="left:252.50px;top:461.82px;color:#383838">Pedal : 1</div>
<svg style="position:absolute;left:299.5px;top:464.5px" width="7" height="7" viewBox="0 0 7 7"><path d="M1.2 1.2 L5.8 5.8 M5.8 1.2 L1.2 5.8" stroke="#3a3a3a" stroke-width="1.7"/></svg>
<div style="position:absolute;left:318px;top:459.5px;width:133px;height:17px;background:#e3e3e3;border:1px solid #d0d0d0;border-top:none"></div>
<svg style="position:absolute;left:324.0px;top:462.0px" width="11" height="12" viewBox="0 0 11 12"><path d="M1 1.2 H6.2 V3.2 H3.3 V5.4 H5.6 V7.3 H3.3 V10.8 H1 Z" fill="#d42020"/><rect x="6.6" y="3.2" width="1.8" height="2" fill="#3a64b8" transform="rotate(0 7.5 7.5)"/><rect x="6.6" y="3.2" width="1.8" height="2" fill="#3a64b8" transform="rotate(45 7.5 7.5)"/><rect x="6.6" y="3.2" width="1.8" height="2" fill="#3a64b8" transform="rotate(90 7.5 7.5)"/><rect x="6.6" y="3.2" width="1.8" height="2" fill="#3a64b8" transform="rotate(135 7.5 7.5)"/><rect x="6.6" y="3.2" width="1.8" height="2" fill="#3a64b8" transform="rotate(180 7.5 7.5)"/><rect x="6.6" y="3.2" width="1.8" height="2" fill="#3a64b8" transform="rotate(225 7.5 7.5)"/><rect x="6.6" y="3.2" width="1.8" height="2" fill="#3a64b8" transform="rotate(270 7.5 7.5)"/><rect x="6.6" y="3.2" width="1.8" height="2" fill="#3a64b8" transform="rotate(315 7.5 7.5)"/><circle cx="7.5" cy="7.5" r="2.9" fill="#3a64b8"/><circle cx="7.5" cy="7.5" r="1" fill="#e8e8f0"/></svg>
<div class="t" style="left:339.00px;top:461.82px;color:#383838">Anschlagplatte : 1</div>
<svg style="position:absolute;left:433.5px;top:464.5px" width="7" height="7" viewBox="0 0 7 7"><path d="M1.2 1.2 L5.8 5.8 M5.8 1.2 L1.2 5.8" stroke="#3a3a3a" stroke-width="1.7"/></svg>
<div style="position:absolute;left:452px;top:459.5px;width:117.5px;height:17px;background:#e3e3e3;border:1px solid #d0d0d0;border-top:none"></div>
<svg style="position:absolute;left:458.0px;top:462.0px" width="11" height="12" viewBox="0 0 11 12"><path d="M1 1.2 H6.2 V3.2 H3.3 V5.4 H5.6 V7.3 H3.3 V10.8 H1 Z" fill="#d42020"/><rect x="6.6" y="3.2" width="1.8" height="2" fill="#3a64b8" transform="rotate(0 7.5 7.5)"/><rect x="6.6" y="3.2" width="1.8" height="2" fill="#3a64b8" transform="rotate(45 7.5 7.5)"/><rect x="6.6" y="3.2" width="1.8" height="2" fill="#3a64b8" transform="rotate(90 7.5 7.5)"/><rect x="6.6" y="3.2" width="1.8" height="2" fill="#3a64b8" transform="rotate(135 7.5 7.5)"/><rect x="6.6" y="3.2" width="1.8" height="2" fill="#3a64b8" transform="rotate(180 7.5 7.5)"/><rect x="6.6" y="3.2" width="1.8" height="2" fill="#3a64b8" transform="rotate(225 7.5 7.5)"/><rect x="6.6" y="3.2" width="1.8" height="2" fill="#3a64b8" transform="rotate(270 7.5 7.5)"/><rect x="6.6" y="3.2" width="1.8" height="2" fill="#3a64b8" transform="rotate(315 7.5 7.5)"/><circle cx="7.5" cy="7.5" r="2.9" fill="#3a64b8"/><circle cx="7.5" cy="7.5" r="1" fill="#e8e8f0"/></svg>
<div class="t" style="left:473.00px;top:461.82px;color:#383838">Unnamed1 : 1*</div>
<svg style="position:absolute;left:552.0px;top:464.5px" width="7" height="7" viewBox="0 0 7 7"><path d="M1.2 1.2 L5.8 5.8 M5.8 1.2 L1.2 5.8" stroke="#3a3a3a" stroke-width="1.7"/></svg>
<div style="position:absolute;left:570.5px;top:459px;width:116.0px;height:19.5px;background:#f6f6f6;border:1px solid #d4d4d4;border-top:none;border-bottom:none"></div>
<svg style="position:absolute;left:576.5px;top:462.0px" width="11" height="12" viewBox="0 0 11 12"><path d="M1 1.2 H6.2 V3.2 H3.3 V5.4 H5.6 V7.3 H3.3 V10.8 H1 Z" fill="#d42020"/><rect x="6.6" y="3.2" width="1.8" height="2" fill="#3a64b8" transform="rotate(0 7.5 7.5)"/><rect x="6.6" y="3.2" width="1.8" height="2" fill="#3a64b8" transform="rotate(45 7.5 7.5)"/><rect x="6.6" y="3.2" width="1.8" height="2" fill="#3a64b8" transform="rotate(90 7.5 7.5)"/><rect x="6.6" y="3.2" width="1.8" height="2" fill="#3a64b8" transform="rotate(135 7.5 7.5)"/><rect x="6.6" y="3.2" width="1.8" height="2" fill="#3a64b8" transform="rotate(180 7.5 7.5)"/><rect x="6.6" y="3.2" width="1.8" height="2" fill="#3a64b8" transform="rotate(225 7.5 7.5)"/><rect x="6.6" y="3.2" width="1.8" height="2" fill="#3a64b8" transform="rotate(270 7.5 7.5)"/><rect x="6.6" y="3.2" width="1.8" height="2" fill="#3a64b8" transform="rotate(315 7.5 7.5)"/><circle cx="7.5" cy="7.5" r="2.9" fill="#3a64b8"/><circle cx="7.5" cy="7.5" r="1" fill="#e8e8f0"/></svg>
<div class="t" style="left:591.50px;top:461.82px;color:#383838">Unnamed2 : 1*</div>
<svg style="position:absolute;left:669.0px;top:464.5px" width="7" height="7" viewBox="0 0 7 7"><path d="M1.2 1.2 L5.8 5.8 M5.8 1.2 L1.2 5.8" stroke="#3a3a3a" stroke-width="1.7"/></svg>
<div class="t" style="left:0.00px;top:-8.78px;"></div>
<svg style="position:absolute;left:667.5px;top:485.0px" width="9" height="11" viewBox="0 0 9 11"><rect x="1.5" y="1" width="6" height="9" rx="3" fill="none" stroke="#444" stroke-width="1"/><path d="M4.5 1 V4" stroke="#444" stroke-width="0.8"/></svg>
<div class="t" style="left:678.50px;top:483.52px;color:#383838;letter-spacing:-0.9px">CAD</div>
<svg style="position:absolute;left:700.5px;top:487.0px" width="6" height="6" viewBox="0 0 6 6"><path d="M1 2 L5 2 L3 4.5 Z" fill="#777"/></svg>
<div class="t" style="left:713.30px;top:483.52px;color:#383838">110,91 mm x 64,46 mm</div>
<svg style="position:absolute;left:231px;top:110px;will-change:transform" width="601" height="349" viewBox="231 110 601 349">
<defs><linearGradient id="bgg" gradientUnits="userSpaceOnUse" x1="0" y1="110" x2="0" y2="459"><stop offset="0" stop-color="#333364"/><stop offset="1" stop-color="#9899ab"/></linearGradient><linearGradient id="cylg" x1="0" y1="0" x2="0" y2="1"><stop offset="0" stop-color="#7c7c7c"/><stop offset="0.15" stop-color="#b8b8b8"/><stop offset="0.35" stop-color="#d6d6d6"/><stop offset="0.55" stop-color="#d2d2d2"/><stop offset="0.8" stop-color="#ababab"/><stop offset="1" stop-color="#686868"/></linearGradient><linearGradient id="pin" x1="0" y1="0" x2="1" y2="0"><stop offset="0" stop-color="#9a9a9a"/><stop offset="0.4" stop-color="#e0e0e0"/><stop offset="1" stop-color="#c8c8c8"/></linearGradient><linearGradient id="topf" gradientUnits="userSpaceOnUse" x1="598" y1="0" x2="628" y2="0"><stop offset="0" stop-color="#323232"/><stop offset="1" stop-color="#181818"/></linearGradient><clipPath id="holeclip"><ellipse cx="368.8" cy="302.5" rx="37.6" ry="39.2"/></clipPath><linearGradient id="a0" x1="0" y1="0" x2="1" y2="0"><stop offset="0" stop-color="rgb(58,58,58)"/><stop offset="0.05" stop-color="rgb(88,88,88)"/><stop offset="0.2" stop-color="rgb(126,126,126)"/><stop offset="0.45" stop-color="rgb(140,140,140)"/><stop offset="0.7" stop-color="rgb(150,150,150)"/><stop offset="0.85" stop-color="rgb(156,156,156)"/><stop offset="0.94" stop-color="rgb(128,128,128)"/><stop offset="1" stop-color="rgb(58,58,58)"/></linearGradient><linearGradient id="a1" x1="0" y1="0" x2="1" y2="0"><stop offset="0" stop-color="rgb(58,58,58)"/><stop offset="0.05" stop-color="rgb(88,88,88)"/><stop offset="0.2" stop-color="rgb(126,126,126)"/><stop offset="0.45" stop-color="rgb(140,140,140)"/><stop offset="0.7" stop-color="rgb(150,150,150)"/><stop offset="0.85" stop-color="rgb(156,156,156)"/><stop offset="0.94" stop-color="rgb(128,128,128)"/><stop offset="1" stop-color="rgb(58,58,58)"/></linearGradient><linearGradient id="a2" x1="0" y1="0" x2="1" y2="0"><stop offset="0" stop-color="rgb(57,57,57)"/><stop offset="0.05" stop-color="rgb(87,87,87)"/><stop offset="0.2" stop-color="rgb(125,125,125)"/><stop offset="0.45" stop-color="rgb(139,139,139)"/><stop offset="0.7" stop-color="rgb(149,149,149)"/><stop offset="0.85" stop-color="rgb(155,155,155)"/><stop offset="0.94" stop-color="rgb(126,126,126)"/><stop offset="1" stop-color="rgb(57,57,57)"/></linearGradient><linearGradient id="a3" x1="0" y1="0" x2="1" y2="0"><stop offset="0" stop-color="rgb(57,57,57)"/><stop offset="0.05" stop-color="rgb(86,86,86)"/><stop offset="0.2" stop-color="rgb(124,124,124)"/><stop offset="0.45" stop-color="rgb(138,138,138)"/><stop offset="0.7" stop-color="rgb(148,148,148)"/><stop offset="0.85" stop-color="rgb(154,154,154)"/><stop offset="0.94" stop-color="rgb(125,125,125)"/><stop offset="1" stop-color="rgb(57,57,57)"/></linearGradient><linearGradient id="a4" x1="0" y1="0" x2="1" y2="0"><stop offset="0" stop-color="rgb(56,56,56)"/><stop offset="0.05" stop-color="rgb(85,85,85)"/><stop offset="0.2" stop-color="rgb(123,123,123)"/><stop offset="0.45" stop-color="rgb(137,137,137)"/><stop offset="0.7" stop-color="rgb(147,147,147)"/><stop offset="0.85" stop-color="rgb(153,153,153)"/><stop offset="0.94" stop-color="rgb(124,124,124)"/><stop offset="1" stop-color="rgb(57,57,57)"/></linearGradient><linearGradient id="a5" x1="0" y1="0" x2="1" y2="0"><stop offset="0" stop-color="rgb(56,56,56)"/><stop offset="0.05" stop-color="rgb(85,85,85)"/><stop offset="0.2" stop-color="rgb(122,122,122)"/><stop offset="0.45" stop-color="rgb(136,136,136)"/><stop offset="0.7" stop-color="rgb(147,147,147)"/><stop offset="0.85" stop-color="rgb(152,152,152)"/><stop offset="0.94" stop-color="rgb(123,123,123)"/><stop offset="1" stop-color="rgb(56,56,56)"/></linearGradient><linearGradient id="a6" x1="0" y1="0" x2="1" y2="0"><stop offset="0" stop-color="rgb(56,56,56)"/><stop offset="0.05" stop-color="rgb(84,84,84)"/><stop offset="0.2" stop-color="rgb(121,121,121)"/><stop offset="0.45" stop-color="rgb(135,135,135)"/><stop offset="0.7" stop-color="rgb(146,146,146)"/><stop offset="0.85" stop-color="rgb(151,151,151)"/><stop offset="0.94" stop-color="rgb(121,121,121)"/><stop offset="1" stop-color="rgb(56,56,56)"/></linearGradient><linearGradient id="a7" x1="0" y1="0" x2="1" y2="0"><stop offset="0" stop-color="rgb(55,55,55)"/><stop offset="0.05" stop-color="rgb(83,83,83)"/><stop offset="0.2" stop-color="rgb(120,120,120)"/><stop offset="0.45" stop-color="rgb(135,135,135)"/><stop offset="0.7" stop-color="rgb(145,145,145)"/><stop offset="0.85" stop-color="rgb(150,150,150)"/><stop offset="0.94" stop-color="rgb(120,120,120)"/><stop offset="1" stop-color="rgb(56,56,56)"/></linearGradient><linearGradient id="a8" x1="0" y1="0" x2="1" y2="0"><stop offset="0" stop-color="rgb(55,55,55)"/><stop offset="0.05" stop-color="rgb(82,82,82)"/><stop offset="0.2" stop-color="rgb(119,119,119)"/><stop offset="0.45" stop-color="rgb(134,134,134)"/><stop offset="0.7" stop-color="rgb(144,144,144)"/><stop offset="0.85" stop-color="rgb(149,149,149)"/><stop offset="0.94" stop-color="rgb(119,119,119)"/><stop offset="1" stop-color="rgb(56,56,56)"/></linearGradient><linearGradient id="a9" x1="0" y1="0" x2="1" y2="0"><stop offset="0" stop-color="rgb(55,55,55)"/><stop offset="0.05" stop-color="rgb(82,82,82)"/><stop offset="0.2" stop-color="rgb(118,118,118)"/><stop offset="0.45" stop-color="rgb(133,133,133)"/><stop offset="0.7" stop-color="rgb(144,144,144)"/><stop offset="0.85" stop-color="rgb(148,148,148)"/><stop offset="0.94" stop-color="rgb(117,117,117)"/><stop offset="1" stop-color="rgb(55,55,55)"/></linearGradient><linearGradient id="a10" x1="0" y1="0" x2="1" y2="0"><stop offset="0" stop-color="rgb(54,54,54)"/><stop offset="0.05" stop-color="rgb(81,81,81)"/><stop offset="0.2" stop-color="rgb(117,117,117)"/><stop offset="0.45" stop-color="rgb(132,132,132)"/><stop offset="0.7" stop-color="rgb(143,143,143)"/><stop offset="0.85" stop-color="rgb(147,147,147)"/><stop offset="0.94" stop-color="rgb(116,116,116)"/><stop offset="1" stop-color="rgb(55,55,55)"/></linearGradient><linearGradient id="a11" x1="0" y1="0" x2="1" y2="0"><stop offset="0" stop-color="rgb(54,54,54)"/><stop offset="0.05" stop-color="rgb(80,80,80)"/><stop offset="0.2" stop-color="rgb(116,116,116)"/><stop offset="0.45" stop-color="rgb(131,131,131)"/><stop offset="0.7" stop-color="rgb(142,142,142)"/><stop offset="0.85" stop-color="rgb(146,146,146)"/><stop offset="0.94" stop-color="rgb(115,115,115)"/><stop offset="1" stop-color="rgb(55,55,55)"/></linearGradient><linearGradient id="a12" x1="0" y1="0" x2="1" y2="0"><stop offset="0" stop-color="rgb(54,54,54)"/><stop offset="0.05" stop-color="rgb(80,80,80)"/><stop offset="0.2" stop-color="rgb(115,115,115)"/><stop offset="0.45" stop-color="rgb(131,131,131)"/><stop offset="0.7" stop-color="rgb(142,142,142)"/><stop offset="0.85" stop-color="rgb(145,145,145)"/><stop offset="0.94" stop-color="rgb(114,114,114)"/><stop offset="1" stop-color="rgb(55,55,55)"/></linearGradient><linearGradient id="a13" x1="0" y1="0" x2="1" y2="0"><stop offset="0" stop-color="rgb(53,53,53)"/><stop offset="0.05" stop-color="rgb(79,79,79)"/><stop offset="0.2" stop-color="rgb(113,113,113)"/><stop offset="0.45" stop-color="rgb(130,130,130)"/><stop offset="0.7" stop-color="rgb(141,141,141)"/><stop offset="0.85" stop-color="rgb(143,143,143)"/><stop offset="0.94" stop-color="rgb(112,112,112)"/><stop offset="1" stop-color="rgb(54,54,54)"/></linearGradient><linearGradient id="a14" x1="0" y1="0" x2="1" y2="0"><stop offset="0" stop-color="rgb(53,53,53)"/><stop offset="0.05" stop-color="rgb(78,78,78)"/><stop offset="0.2" stop-color="rgb(112,112,112)"/><stop offset="0.45" stop-color="rgb(129,129,129)"/><stop offset="0.7" stop-color="rgb(140,140,140)"/><stop offset="0.85" stop-color="rgb(142,142,142)"/><stop offset="0.94" stop-color="rgb(111,111,111)"/><stop offset="1" stop-color="rgb(54,54,54)"/></linearGradient><linearGradient id="a15" x1="0" y1="0" x2="1" y2="0"><stop offset="0" stop-color="rgb(52,52,52)"/><stop offset="0.05" stop-color="rgb(77,77,77)"/><stop offset="0.2" stop-color="rgb(111,111,111)"/><stop offset="0.45" stop-color="rgb(128,128,128)"/><stop offset="0.7" stop-color="rgb(139,139,139)"/><stop offset="0.85" stop-color="rgb(141,141,141)"/><stop offset="0.94" stop-color="rgb(110,110,110)"/><stop offset="1" stop-color="rgb(54,54,54)"/></linearGradient><linearGradient id="a16" x1="0" y1="0" x2="1" y2="0"><stop offset="0" stop-color="rgb(52,52,52)"/><stop offset="0.05" stop-color="rgb(77,77,77)"/><stop offset="0.2" stop-color="rgb(110,110,110)"/><stop offset="0.45" stop-color="rgb(127,127,127)"/><stop offset="0.7" stop-color="rgb(139,139,139)"/><stop offset="0.85" stop-color="rgb(140,140,140)"/><stop offset="0.94" stop-color="rgb(108,108,108)"/><stop offset="1" stop-color="rgb(53,53,53)"/></linearGradient><linearGradient id="a17" x1="0" y1="0" x2="1" y2="0"><stop offset="0" stop-color="rgb(52,52,52)"/><stop offset="0.05" stop-color="rgb(76,76,76)"/><stop offset="0.2" stop-color="rgb(109,109,109)"/><stop offset="0.45" stop-color="rgb(126,126,126)"/><stop offset="0.7" stop-color="rgb(138,138,138)"/><stop offset="0.85" stop-color="rgb(139,139,139)"/><stop offset="0.94" stop-color="rgb(107,107,107)"/><stop offset="1" stop-color="rgb(53,53,53)"/></linearGradient><linearGradient id="a18" x1="0" y1="0" x2="1" y2="0"><stop offset="0" stop-color="rgb(51,51,51)"/><stop offset="0.05" stop-color="rgb(75,75,75)"/><stop offset="0.2" stop-color="rgb(108,108,108)"/><stop offset="0.45" stop-color="rgb(126,126,126)"/><stop offset="0.7" stop-color="rgb(137,137,137)"/><stop offset="0.85" stop-color="rgb(138,138,138)"/><stop offset="0.94" stop-color="rgb(106,106,106)"/><stop offset="1" stop-color="rgb(53,53,53)"/></linearGradient><linearGradient id="a19" x1="0" y1="0" x2="1" y2="0"><stop offset="0" stop-color="rgb(51,51,51)"/><stop offset="0.05" stop-color="rgb(74,74,74)"/><stop offset="0.2" stop-color="rgb(107,107,107)"/><stop offset="0.45" stop-color="rgb(125,125,125)"/><stop offset="0.7" stop-color="rgb(136,136,136)"/><stop offset="0.85" stop-color="rgb(137,137,137)"/><stop offset="0.94" stop-color="rgb(104,104,104)"/><stop offset="1" stop-color="rgb(53,53,53)"/></linearGradient><linearGradient id="a20" x1="0" y1="0" x2="1" y2="0"><stop offset="0" stop-color="rgb(51,51,51)"/><stop offset="0.05" stop-color="rgb(74,74,74)"/><stop offset="0.2" stop-color="rgb(106,106,106)"/><stop offset="0.45" stop-color="rgb(124,124,124)"/><stop offset="0.7" stop-color="rgb(136,136,136)"/><stop offset="0.85" stop-color="rgb(136,136,136)"/><stop offset="0.94" stop-color="rgb(103,103,103)"/><stop offset="1" stop-color="rgb(52,52,52)"/></linearGradient><linearGradient id="a21" x1="0" y1="0" x2="1" y2="0"><stop offset="0" stop-color="rgb(50,50,50)"/><stop offset="0.05" stop-color="rgb(73,73,73)"/><stop offset="0.2" stop-color="rgb(105,105,105)"/><stop offset="0.45" stop-color="rgb(123,123,123)"/><stop offset="0.7" stop-color="rgb(135,135,135)"/><stop offset="0.85" stop-color="rgb(135,135,135)"/><stop offset="0.94" stop-color="rgb(102,102,102)"/><stop offset="1" stop-color="rgb(52,52,52)"/></linearGradient><linearGradient id="a22" x1="0" y1="0" x2="1" y2="0"><stop offset="0" stop-color="rgb(50,50,50)"/><stop offset="0.05" stop-color="rgb(72,72,72)"/><stop offset="0.2" stop-color="rgb(104,104,104)"/><stop offset="0.45" stop-color="rgb(122,122,122)"/><stop offset="0.7" stop-color="rgb(134,134,134)"/><stop offset="0.85" stop-color="rgb(134,134,134)"/><stop offset="0.94" stop-color="rgb(101,101,101)"/><stop offset="1" stop-color="rgb(52,52,52)"/></linearGradient><linearGradient id="a23" x1="0" y1="0" x2="1" y2="0"><stop offset="0" stop-color="rgb(49,49,49)"/><stop offset="0.05" stop-color="rgb(71,71,71)"/><stop offset="0.2" stop-color="rgb(103,103,103)"/><stop offset="0.45" stop-color="rgb(121,121,121)"/><stop offset="0.7" stop-color="rgb(133,133,133)"/><stop offset="0.85" stop-color="rgb(133,133,133)"/><stop offset="0.94" stop-color="rgb(99,99,99)"/><stop offset="1" stop-color="rgb(51,51,51)"/></linearGradient><linearGradient id="a24" x1="0" y1="0" x2="1" y2="0"><stop offset="0" stop-color="rgb(49,49,49)"/><stop offset="0.05" stop-color="rgb(70,70,70)"/><stop offset="0.2" stop-color="rgb(101,101,101)"/><stop offset="0.45" stop-color="rgb(119,119,119)"/><stop offset="0.7" stop-color="rgb(131,131,131)"/><stop offset="0.85" stop-color="rgb(132,132,132)"/><stop offset="0.94" stop-color="rgb(98,98,98)"/><stop offset="1" stop-color="rgb(51,51,51)"/></linearGradient><linearGradient id="a25" x1="0" y1="0" x2="1" y2="0"><stop offset="0" stop-color="rgb(49,49,49)"/><stop offset="0.05" stop-color="rgb(69,69,69)"/><stop offset="0.2" stop-color="rgb(99,99,99)"/><stop offset="0.45" stop-color="rgb(117,117,117)"/><stop offset="0.7" stop-color="rgb(130,130,130)"/><stop offset="0.85" stop-color="rgb(130,130,130)"/><stop offset="0.94" stop-color="rgb(97,97,97)"/><stop offset="1" stop-color="rgb(50,50,50)"/></linearGradient><linearGradient id="a26" x1="0" y1="0" x2="1" y2="0"><stop offset="0" stop-color="rgb(48,48,48)"/><stop offset="0.05" stop-color="rgb(68,68,68)"/><stop offset="0.2" stop-color="rgb(97,97,97)"/><stop offset="0.45" stop-color="rgb(115,115,115)"/><stop offset="0.7" stop-color="rgb(128,128,128)"/><stop offset="0.85" stop-color="rgb(129,129,129)"/><stop offset="0.94" stop-color="rgb(96,96,96)"/><stop offset="1" stop-color="rgb(50,50,50)"/></linearGradient><linearGradient id="a27" x1="0" y1="0" x2="1" y2="0"><stop offset="0" stop-color="rgb(48,48,48)"/><stop offset="0.05" stop-color="rgb(67,67,67)"/><stop offset="0.2" stop-color="rgb(95,95,95)"/><stop offset="0.45" stop-color="rgb(113,113,113)"/><stop offset="0.7" stop-color="rgb(126,126,126)"/><stop offset="0.85" stop-color="rgb(127,127,127)"/><stop offset="0.94" stop-color="rgb(95,95,95)"/><stop offset="1" stop-color="rgb(49,49,49)"/></linearGradient><linearGradient id="a28" x1="0" y1="0" x2="1" y2="0"><stop offset="0" stop-color="rgb(47,47,47)"/><stop offset="0.05" stop-color="rgb(65,65,65)"/><stop offset="0.2" stop-color="rgb(93,93,93)"/><stop offset="0.45" stop-color="rgb(111,111,111)"/><stop offset="0.7" stop-color="rgb(124,124,124)"/><stop offset="0.85" stop-color="rgb(126,126,126)"/><stop offset="0.94" stop-color="rgb(94,94,94)"/><stop offset="1" stop-color="rgb(49,49,49)"/></linearGradient><linearGradient id="a29" x1="0" y1="0" x2="1" y2="0"><stop offset="0" stop-color="rgb(47,47,47)"/><stop offset="0.05" stop-color="rgb(64,64,64)"/><stop offset="0.2" stop-color="rgb(91,91,91)"/><stop offset="0.45" stop-color="rgb(109,109,109)"/><stop offset="0.7" stop-color="rgb(123,123,123)"/><stop offset="0.85" stop-color="rgb(124,124,124)"/><stop offset="0.94" stop-color="rgb(93,93,93)"/><stop offset="1" stop-color="rgb(48,48,48)"/></linearGradient><linearGradient id="a30" x1="0" y1="0" x2="1" y2="0"><stop offset="0" stop-color="rgb(46,46,46)"/><stop offset="0.05" stop-color="rgb(63,63,63)"/><stop offset="0.2" stop-color="rgb(89,89,89)"/><stop offset="0.45" stop-color="rgb(107,107,107)"/><stop offset="0.7" stop-color="rgb(121,121,121)"/><stop offset="0.85" stop-color="rgb(123,123,123)"/><stop offset="0.94" stop-color="rgb(92,92,92)"/><stop offset="1" stop-color="rgb(48,48,48)"/></linearGradient><linearGradient id="a31" x1="0" y1="0" x2="1" y2="0"><stop offset="0" stop-color="rgb(46,46,46)"/><stop offset="0.05" stop-color="rgb(62,62,62)"/><stop offset="0.2" stop-color="rgb(87,87,87)"/><stop offset="0.45" stop-color="rgb(105,105,105)"/><stop offset="0.7" stop-color="rgb(119,119,119)"/><stop offset="0.85" stop-color="rgb(121,121,121)"/><stop offset="0.94" stop-color="rgb(91,91,91)"/><stop offset="1" stop-color="rgb(47,47,47)"/></linearGradient><linearGradient id="a32" x1="0" y1="0" x2="1" y2="0"><stop offset="0" stop-color="rgb(46,46,46)"/><stop offset="0.05" stop-color="rgb(61,61,61)"/><stop offset="0.2" stop-color="rgb(85,85,85)"/><stop offset="0.45" stop-color="rgb(104,104,104)"/><stop offset="0.7" stop-color="rgb(118,118,118)"/><stop offset="0.85" stop-color="rgb(120,120,120)"/><stop offset="0.94" stop-color="rgb(90,90,90)"/><stop offset="1" stop-color="rgb(47,47,47)"/></linearGradient><linearGradient id="a33" x1="0" y1="0" x2="1" y2="0"><stop offset="0" stop-color="rgb(45,45,45)"/><stop offset="0.05" stop-color="rgb(59,59,59)"/><stop offset="0.2" stop-color="rgb(82,82,82)"/><stop offset="0.45" stop-color="rgb(102,102,102)"/><stop offset="0.7" stop-color="rgb(116,116,116)"/><stop offset="0.85" stop-color="rgb(118,118,118)"/><stop offset="0.94" stop-color="rgb(88,88,88)"/><stop offset="1" stop-color="rgb(46,46,46)"/></linearGradient><linearGradient id="a34" x1="0" y1="0" x2="1" y2="0"><stop offset="0" stop-color="rgb(45,45,45)"/><stop offset="0.05" stop-color="rgb(58,58,58)"/><stop offset="0.2" stop-color="rgb(80,80,80)"/><stop offset="0.45" stop-color="rgb(100,100,100)"/><stop offset="0.7" stop-color="rgb(114,114,114)"/><stop offset="0.85" stop-color="rgb(116,116,116)"/><stop offset="0.94" stop-color="rgb(87,87,87)"/><stop offset="1" stop-color="rgb(45,45,45)"/></linearGradient><linearGradient id="a35" x1="0" y1="0" x2="1" y2="0"><stop offset="0" stop-color="rgb(44,44,44)"/><stop offset="0.05" stop-color="rgb(57,57,57)"/><stop offset="0.2" stop-color="rgb(78,78,78)"/><stop offset="0.45" stop-color="rgb(98,98,98)"/><stop offset="0.7" stop-color="rgb(112,112,112)"/><stop offset="0.85" stop-color="rgb(115,115,115)"/><stop offset="0.94" stop-color="rgb(86,86,86)"/><stop offset="1" stop-color="rgb(45,45,45)"/></linearGradient><linearGradient id="a36" x1="0" y1="0" x2="1" y2="0"><stop offset="0" stop-color="rgb(44,44,44)"/><stop offset="0.05" stop-color="rgb(56,56,56)"/><stop offset="0.2" stop-color="rgb(76,76,76)"/><stop offset="0.45" stop-color="rgb(96,96,96)"/><stop offset="0.7" stop-color="rgb(111,111,111)"/><stop offset="0.85" stop-color="rgb(113,113,113)"/><stop offset="0.94" stop-color="rgb(85,85,85)"/><stop offset="1" stop-color="rgb(44,44,44)"/></linearGradient><linearGradient id="a37" x1="0" y1="0" x2="1" y2="0"><stop offset="0" stop-color="rgb(43,43,43)"/><stop offset="0.05" stop-color="rgb(55,55,55)"/><stop offset="0.2" stop-color="rgb(74,74,74)"/><stop offset="0.45" stop-color="rgb(94,94,94)"/><stop offset="0.7" stop-color="rgb(109,109,109)"/><stop offset="0.85" stop-color="rgb(112,112,112)"/><stop offset="0.94" stop-color="rgb(84,84,84)"/><stop offset="1" stop-color="rgb(44,44,44)"/></linearGradient><linearGradient id="a38" x1="0" y1="0" x2="1" y2="0"><stop offset="0" stop-color="rgb(43,43,43)"/><stop offset="0.05" stop-color="rgb(53,53,53)"/><stop offset="0.2" stop-color="rgb(72,72,72)"/><stop offset="0.45" stop-color="rgb(92,92,92)"/><stop offset="0.7" stop-color="rgb(107,107,107)"/><stop offset="0.85" stop-color="rgb(110,110,110)"/><stop offset="0.94" stop-color="rgb(83,83,83)"/><stop offset="1" stop-color="rgb(43,43,43)"/></linearGradient><linearGradient id="a39" x1="0" y1="0" x2="1" y2="0"><stop offset="0" stop-color="rgb(42,42,42)"/><stop offset="0.05" stop-color="rgb(52,52,52)"/><stop offset="0.2" stop-color="rgb(70,70,70)"/><stop offset="0.45" stop-color="rgb(90,90,90)"/><stop offset="0.7" stop-color="rgb(105,105,105)"/><stop offset="0.85" stop-color="rgb(109,109,109)"/><stop offset="0.94" stop-color="rgb(82,82,82)"/><stop offset="1" stop-color="rgb(43,43,43)"/></linearGradient><linearGradient id="a40" x1="0" y1="0" x2="1" y2="0"><stop offset="0" stop-color="rgb(42,42,42)"/><stop offset="0.05" stop-color="rgb(51,51,51)"/><stop offset="0.2" stop-color="rgb(68,68,68)"/><stop offset="0.45" stop-color="rgb(88,88,88)"/><stop offset="0.7" stop-color="rgb(104,104,104)"/><stop offset="0.85" stop-color="rgb(107,107,107)"/><stop offset="0.94" stop-color="rgb(81,81,81)"/><stop offset="1" stop-color="rgb(42,42,42)"/></linearGradient><linearGradient id="a41" x1="0" y1="0" x2="1" y2="0"><stop offset="0" stop-color="rgb(42,42,42)"/><stop offset="0.05" stop-color="rgb(50,50,50)"/><stop offset="0.2" stop-color="rgb(66,66,66)"/><stop offset="0.45" stop-color="rgb(86,86,86)"/><stop offset="0.7" stop-color="rgb(102,102,102)"/><stop offset="0.85" stop-color="rgb(106,106,106)"/><stop offset="0.94" stop-color="rgb(80,80,80)"/><stop offset="1" stop-color="rgb(42,42,42)"/></linearGradient><linearGradient id="a42" x1="0" y1="0" x2="1" y2="0"><stop offset="0" stop-color="rgb(41,41,41)"/><stop offset="0.05" stop-color="rgb(49,49,49)"/><stop offset="0.2" stop-color="rgb(64,64,64)"/><stop offset="0.45" stop-color="rgb(84,84,84)"/><stop offset="0.7" stop-color="rgb(99,99,99)"/><stop offset="0.85" stop-color="rgb(104,104,104)"/><stop offset="0.94" stop-color="rgb(78,78,78)"/><stop offset="1" stop-color="rgb(41,41,41)"/></linearGradient><linearGradient id="a43" x1="0" y1="0" x2="1" y2="0"><stop offset="0" stop-color="rgb(40,40,40)"/><stop offset="0.05" stop-color="rgb(48,48,48)"/><stop offset="0.2" stop-color="rgb(62,62,62)"/><stop offset="0.45" stop-color="rgb(81,81,81)"/><stop offset="0.7" stop-color="rgb(97,97,97)"/><stop offset="0.85" stop-color="rgb(101,101,101)"/><stop offset="0.94" stop-color="rgb(77,77,77)"/><stop offset="1" stop-color="rgb(41,41,41)"/></linearGradient><linearGradient id="a44" x1="0" y1="0" x2="1" y2="0"><stop offset="0" stop-color="rgb(40,40,40)"/><stop offset="0.05" stop-color="rgb(47,47,47)"/><stop offset="0.2" stop-color="rgb(61,61,61)"/><stop offset="0.45" stop-color="rgb(79,79,79)"/><stop offset="0.7" stop-color="rgb(94,94,94)"/><stop offset="0.85" stop-color="rgb(99,99,99)"/><stop offset="0.94" stop-color="rgb(75,75,75)"/><stop offset="1" stop-color="rgb(40,40,40)"/></linearGradient><linearGradient id="a45" x1="0" y1="0" x2="1" y2="0"><stop offset="0" stop-color="rgb(39,39,39)"/><stop offset="0.05" stop-color="rgb(46,46,46)"/><stop offset="0.2" stop-color="rgb(59,59,59)"/><stop offset="0.45" stop-color="rgb(77,77,77)"/><stop offset="0.7" stop-color="rgb(92,92,92)"/><stop offset="0.85" stop-color="rgb(96,96,96)"/><stop offset="0.94" stop-color="rgb(74,74,74)"/><stop offset="1" stop-color="rgb(40,40,40)"/></linearGradient><linearGradient id="a46" x1="0" y1="0" x2="1" y2="0"><stop offset="0" stop-color="rgb(39,39,39)"/><stop offset="0.05" stop-color="rgb(45,45,45)"/><stop offset="0.2" stop-color="rgb(57,57,57)"/><stop offset="0.45" stop-color="rgb(74,74,74)"/><stop offset="0.7" stop-color="rgb(89,89,89)"/><stop offset="0.85" stop-color="rgb(94,94,94)"/><stop offset="0.94" stop-color="rgb(73,73,73)"/><stop offset="1" stop-color="rgb(40,40,40)"/></linearGradient><linearGradient id="a47" x1="0" y1="0" x2="1" y2="0"><stop offset="0" stop-color="rgb(38,38,38)"/><stop offset="0.05" stop-color="rgb(44,44,44)"/><stop offset="0.2" stop-color="rgb(56,56,56)"/><stop offset="0.45" stop-color="rgb(72,72,72)"/><stop offset="0.7" stop-color="rgb(87,87,87)"/><stop offset="0.85" stop-color="rgb(92,92,92)"/><stop offset="0.94" stop-color="rgb(71,71,71)"/><stop offset="1" stop-color="rgb(39,39,39)"/></linearGradient><linearGradient id="a48" x1="0" y1="0" x2="1" y2="0"><stop offset="0" stop-color="rgb(37,37,37)"/><stop offset="0.05" stop-color="rgb(43,43,43)"/><stop offset="0.2" stop-color="rgb(54,54,54)"/><stop offset="0.45" stop-color="rgb(70,70,70)"/><stop offset="0.7" stop-color="rgb(84,84,84)"/><stop offset="0.85" stop-color="rgb(89,89,89)"/><stop offset="0.94" stop-color="rgb(70,70,70)"/><stop offset="1" stop-color="rgb(39,39,39)"/></linearGradient><linearGradient id="a49" x1="0" y1="0" x2="1" y2="0"><stop offset="0" stop-color="rgb(37,37,37)"/><stop offset="0.05" stop-color="rgb(42,42,42)"/><stop offset="0.2" stop-color="rgb(52,52,52)"/><stop offset="0.45" stop-color="rgb(68,68,68)"/><stop offset="0.7" stop-color="rgb(82,82,82)"/><stop offset="0.85" stop-color="rgb(87,87,87)"/><stop offset="0.94" stop-color="rgb(68,68,68)"/><stop offset="1" stop-color="rgb(39,39,39)"/></linearGradient><linearGradient id="a50" x1="0" y1="0" x2="1" y2="0"><stop offset="0" stop-color="rgb(36,36,36)"/><stop offset="0.05" stop-color="rgb(41,41,41)"/><stop offset="0.2" stop-color="rgb(51,51,51)"/><stop offset="0.45" stop-color="rgb(65,65,65)"/><stop offset="0.7" stop-color="rgb(79,79,79)"/><stop offset="0.85" stop-color="rgb(84,84,84)"/><stop offset="0.94" stop-color="rgb(67,67,67)"/><stop offset="1" stop-color="rgb(38,38,38)"/></linearGradient><linearGradient id="a51" x1="0" y1="0" x2="1" y2="0"><stop offset="0" stop-color="rgb(36,36,36)"/><stop offset="0.05" stop-color="rgb(40,40,40)"/><stop offset="0.2" stop-color="rgb(49,49,49)"/><stop offset="0.45" stop-color="rgb(63,63,63)"/><stop offset="0.7" stop-color="rgb(77,77,77)"/><stop offset="0.85" stop-color="rgb(82,82,82)"/><stop offset="0.94" stop-color="rgb(65,65,65)"/><stop offset="1" stop-color="rgb(38,38,38)"/></linearGradient><linearGradient id="a52" x1="0" y1="0" x2="1" y2="0"><stop offset="0" stop-color="rgb(35,35,35)"/><stop offset="0.05" stop-color="rgb(39,39,39)"/><stop offset="0.2" stop-color="rgb(47,47,47)"/><stop offset="0.45" stop-color="rgb(61,61,61)"/><stop offset="0.7" stop-color="rgb(74,74,74)"/><stop offset="0.85" stop-color="rgb(80,80,80)"/><stop offset="0.94" stop-color="rgb(64,64,64)"/><stop offset="1" stop-color="rgb(38,38,38)"/></linearGradient><linearGradient id="a53" x1="0" y1="0" x2="1" y2="0"><stop offset="0" stop-color="rgb(34,34,34)"/><stop offset="0.05" stop-color="rgb(38,38,38)"/><stop offset="0.2" stop-color="rgb(46,46,46)"/><stop offset="0.45" stop-color="rgb(59,59,59)"/><stop offset="0.7" stop-color="rgb(72,72,72)"/><stop offset="0.85" stop-color="rgb(77,77,77)"/><stop offset="0.94" stop-color="rgb(62,62,62)"/><stop offset="1" stop-color="rgb(37,37,37)"/></linearGradient><linearGradient id="a54" x1="0" y1="0" x2="1" y2="0"><stop offset="0" stop-color="rgb(34,34,34)"/><stop offset="0.05" stop-color="rgb(37,37,37)"/><stop offset="0.2" stop-color="rgb(44,44,44)"/><stop offset="0.45" stop-color="rgb(56,56,56)"/><stop offset="0.7" stop-color="rgb(69,69,69)"/><stop offset="0.85" stop-color="rgb(75,75,75)"/><stop offset="0.94" stop-color="rgb(61,61,61)"/><stop offset="1" stop-color="rgb(37,37,37)"/></linearGradient><linearGradient id="a55" x1="0" y1="0" x2="1" y2="0"><stop offset="0" stop-color="rgb(33,33,33)"/><stop offset="0.05" stop-color="rgb(36,36,36)"/><stop offset="0.2" stop-color="rgb(42,42,42)"/><stop offset="0.45" stop-color="rgb(54,54,54)"/><stop offset="0.7" stop-color="rgb(67,67,67)"/><stop offset="0.85" stop-color="rgb(72,72,72)"/><stop offset="0.94" stop-color="rgb(60,60,60)"/><stop offset="1" stop-color="rgb(37,37,37)"/></linearGradient><linearGradient id="a56" x1="0" y1="0" x2="1" y2="0"><stop offset="0" stop-color="rgb(33,33,33)"/><stop offset="0.05" stop-color="rgb(35,35,35)"/><stop offset="0.2" stop-color="rgb(41,41,41)"/><stop offset="0.45" stop-color="rgb(52,52,52)"/><stop offset="0.7" stop-color="rgb(64,64,64)"/><stop offset="0.85" stop-color="rgb(70,70,70)"/><stop offset="0.94" stop-color="rgb(58,58,58)"/><stop offset="1" stop-color="rgb(36,36,36)"/></linearGradient><linearGradient id="a57" x1="0" y1="0" x2="1" y2="0"><stop offset="0" stop-color="rgb(32,32,32)"/><stop offset="0.05" stop-color="rgb(34,34,34)"/><stop offset="0.2" stop-color="rgb(39,39,39)"/><stop offset="0.45" stop-color="rgb(49,49,49)"/><stop offset="0.7" stop-color="rgb(62,62,62)"/><stop offset="0.85" stop-color="rgb(68,68,68)"/><stop offset="0.94" stop-color="rgb(57,57,57)"/><stop offset="1" stop-color="rgb(36,36,36)"/></linearGradient><linearGradient id="a58" x1="0" y1="0" x2="1" y2="0"><stop offset="0" stop-color="rgb(32,32,32)"/><stop offset="0.05" stop-color="rgb(34,34,34)"/><stop offset="0.2" stop-color="rgb(38,38,38)"/><stop offset="0.45" stop-color="rgb(47,47,47)"/><stop offset="0.7" stop-color="rgb(59,59,59)"/><stop offset="0.85" stop-color="rgb(65,65,65)"/><stop offset="0.94" stop-color="rgb(55,55,55)"/><stop offset="1" stop-color="rgb(36,36,36)"/></linearGradient><linearGradient id="a59" x1="0" y1="0" x2="1" y2="0"><stop offset="0" stop-color="rgb(32,32,32)"/><stop offset="0.05" stop-color="rgb(34,34,34)"/><stop offset="0.2" stop-color="rgb(38,38,38)"/><stop offset="0.45" stop-color="rgb(47,47,47)"/><stop offset="0.7" stop-color="rgb(59,59,59)"/><stop offset="0.85" stop-color="rgb(65,65,65)"/><stop offset="0.94" stop-color="rgb(55,55,55)"/><stop offset="1" stop-color="rgb(36,36,36)"/></linearGradient><linearGradient id="a60" x1="0" y1="0" x2="1" y2="0"><stop offset="0" stop-color="rgb(32,32,32)"/><stop offset="0.05" stop-color="rgb(34,34,34)"/><stop offset="0.2" stop-color="rgb(38,38,38)"/><stop offset="0.45" stop-color="rgb(47,47,47)"/><stop offset="0.7" stop-color="rgb(58,58,58)"/><stop offset="0.85" stop-color="rgb(64,64,64)"/><stop offset="0.94" stop-color="rgb(54,54,54)"/><stop offset="1" stop-color="rgb(36,36,36)"/></linearGradient><linearGradient id="a61" x1="0" y1="0" x2="1" y2="0"><stop offset="0" stop-color="rgb(32,32,32)"/><stop offset="0.05" stop-color="rgb(34,34,34)"/><stop offset="0.2" stop-color="rgb(38,38,38)"/><stop offset="0.45" stop-color="rgb(47,47,47)"/><stop offset="0.7" stop-color="rgb(57,57,57)"/><stop offset="0.85" stop-color="rgb(63,63,63)"/><stop offset="0.94" stop-color="rgb(54,54,54)"/><stop offset="1" stop-color="rgb(36,36,36)"/></linearGradient><linearGradient id="a62" x1="0" y1="0" x2="1" y2="0"><stop offset="0" stop-color="rgb(32,32,32)"/><stop offset="0.05" stop-color="rgb(34,34,34)"/><stop offset="0.2" stop-color="rgb(38,38,38)"/><stop offset="0.45" stop-color="rgb(46,46,46)"/><stop offset="0.7" stop-color="rgb(57,57,57)"/><stop offset="0.85" stop-color="rgb(62,62,62)"/><stop offset="0.94" stop-color="rgb(53,53,53)"/><stop offset="1" stop-color="rgb(36,36,36)"/></linearGradient><linearGradient id="a63" x1="0" y1="0" x2="1" y2="0"><stop offset="0" stop-color="rgb(32,32,32)"/><stop offset="0.05" stop-color="rgb(34,34,34)"/><stop offset="0.2" stop-color="rgb(38,38,38)"/><stop offset="0.45" stop-color="rgb(46,46,46)"/><stop offset="0.7" stop-color="rgb(56,56,56)"/><stop offset="0.85" stop-color="rgb(61,61,61)"/><stop offset="0.94" stop-color="rgb(53,53,53)"/><stop offset="1" stop-color="rgb(36,36,36)"/></linearGradient><linearGradient id="a64" x1="0" y1="0" x2="1" y2="0"><stop offset="0" stop-color="rgb(32,32,32)"/><stop offset="0.05" stop-color="rgb(34,34,34)"/><stop offset="0.2" stop-color="rgb(38,38,38)"/><stop offset="0.45" stop-color="rgb(46,46,46)"/><stop offset="0.7" stop-color="rgb(55,55,55)"/><stop offset="0.85" stop-color="rgb(60,60,60)"/><stop offset="0.94" stop-color="rgb(52,52,52)"/><stop offset="1" stop-color="rgb(36,36,36)"/></linearGradient><linearGradient id="a65" x1="0" y1="0" x2="1" y2="0"><stop offset="0" stop-color="rgb(32,32,32)"/><stop offset="0.05" stop-color="rgb(34,34,34)"/><stop offset="0.2" stop-color="rgb(38,38,38)"/><stop offset="0.45" stop-color="rgb(46,46,46)"/><stop offset="0.7" stop-color="rgb(55,55,55)"/><stop offset="0.85" stop-color="rgb(59,59,59)"/><stop offset="0.94" stop-color="rgb(52,52,52)"/><stop offset="1" stop-color="rgb(36,36,36)"/></linearGradient><linearGradient id="a66" x1="0" y1="0" x2="1" y2="0"><stop offset="0" stop-color="rgb(32,32,32)"/><stop offset="0.05" stop-color="rgb(34,34,34)"/><stop offset="0.2" stop-color="rgb(38,38,38)"/><stop offset="0.45" stop-color="rgb(45,45,45)"/><stop offset="0.7" stop-color="rgb(54,54,54)"/><stop offset="0.85" stop-color="rgb(59,59,59)"/><stop offset="0.94" stop-color="rgb(51,51,51)"/><stop offset="1" stop-color="rgb(36,36,36)"/></linearGradient><linearGradient id="a67" x1="0" y1="0" x2="1" y2="0"><stop offset="0" stop-color="rgb(32,32,32)"/><stop offset="0.05" stop-color="rgb(34,34,34)"/><stop offset="0.2" stop-color="rgb(38,38,38)"/><stop offset="0.45" stop-color="rgb(45,45,45)"/><stop offset="0.7" stop-color="rgb(53,53,53)"/><stop offset="0.85" stop-color="rgb(58,58,58)"/><stop offset="0.94" stop-color="rgb(51,51,51)"/><stop offset="1" stop-color="rgb(36,36,36)"/></linearGradient><linearGradient id="a68" x1="0" y1="0" x2="1" y2="0"><stop offset="0" stop-color="rgb(32,32,32)"/><stop offset="0.05" stop-color="rgb(34,34,34)"/><stop offset="0.2" stop-color="rgb(38,38,38)"/><stop offset="0.45" stop-color="rgb(45,45,45)"/><stop offset="0.7" stop-color="rgb(53,53,53)"/><stop offset="0.85" stop-color="rgb(57,57,57)"/><stop offset="0.94" stop-color="rgb(50,50,50)"/><stop offset="1" stop-color="rgb(36,36,36)"/></linearGradient><linearGradient id="a69" x1="0" y1="0" x2="1" y2="0"><stop offset="0" stop-color="rgb(32,32,32)"/><stop offset="0.05" stop-color="rgb(34,34,34)"/><stop offset="0.2" stop-color="rgb(38,38,38)"/><stop offset="0.45" stop-color="rgb(45,45,45)"/><stop offset="0.7" stop-color="rgb(52,52,52)"/><stop offset="0.85" stop-color="rgb(56,56,56)"/><stop offset="0.94" stop-color="rgb(50,50,50)"/><stop offset="1" stop-color="rgb(36,36,36)"/></linearGradient></defs>
<rect x="231" y="110" width="601" height="349" fill="url(#bgg)"/>
<path d="M395.89 109.70 L551.46 109.70 L550.73 113.30 L395.33 113.30 Z" fill="url(#a0)"/>
<path d="M395.45 112.70 L550.85 112.70 L550.11 116.30 L394.71 116.30 Z" fill="url(#a1)"/>
<path d="M394.84 115.70 L550.24 115.70 L549.50 119.30 L394.10 119.30 Z" fill="url(#a2)"/>
<path d="M394.22 118.70 L549.62 118.70 L548.88 122.30 L393.48 122.30 Z" fill="url(#a3)"/>
<path d="M393.61 121.70 L549.01 121.70 L548.27 125.30 L392.87 125.30 Z" fill="url(#a4)"/>
<path d="M392.99 124.70 L548.39 124.70 L547.65 128.30 L392.25 128.30 Z" fill="url(#a5)"/>
<path d="M392.37 127.70 L547.77 127.70 L547.04 131.30 L391.64 131.30 Z" fill="url(#a6)"/>
<path d="M391.76 130.70 L547.16 130.70 L546.42 134.30 L391.02 134.30 Z" fill="url(#a7)"/>
<path d="M391.14 133.70 L546.54 133.70 L545.81 137.30 L390.41 137.30 Z" fill="url(#a8)"/>
<path d="M390.53 136.70 L545.93 136.70 L545.19 140.30 L389.79 140.30 Z" fill="url(#a9)"/>
<path d="M389.91 139.70 L545.31 139.70 L544.57 143.30 L389.17 143.30 Z" fill="url(#a10)"/>
<path d="M389.30 142.70 L544.70 142.70 L543.96 146.30 L388.56 146.30 Z" fill="url(#a11)"/>
<path d="M388.68 145.70 L544.08 145.70 L543.34 149.30 L387.94 149.30 Z" fill="url(#a12)"/>
<path d="M388.07 148.70 L543.47 148.70 L542.62 152.30 L387.20 152.30 Z" fill="url(#a13)"/>
<path d="M387.36 151.70 L542.78 151.70 L541.88 155.30 L386.42 155.30 Z" fill="url(#a14)"/>
<path d="M386.58 154.70 L542.03 154.70 L541.12 158.30 L385.64 158.30 Z" fill="url(#a15)"/>
<path d="M385.80 157.70 L541.28 157.70 L540.38 161.30 L384.86 161.30 Z" fill="url(#a16)"/>
<path d="M385.02 160.70 L540.53 160.70 L539.62 164.30 L384.08 164.30 Z" fill="url(#a17)"/>
<path d="M384.24 163.70 L539.78 163.70 L538.88 167.30 L383.30 167.30 Z" fill="url(#a18)"/>
<path d="M383.46 166.70 L539.03 166.70 L538.12 170.30 L382.52 170.30 Z" fill="url(#a19)"/>
<path d="M382.68 169.70 L538.28 169.70 L537.38 173.30 L381.74 173.30 Z" fill="url(#a20)"/>
<path d="M381.90 172.70 L537.53 172.70 L536.62 176.30 L380.96 176.30 Z" fill="url(#a21)"/>
<path d="M381.12 175.70 L536.78 175.70 L535.88 179.30 L380.18 179.30 Z" fill="url(#a22)"/>
<path d="M380.34 178.70 L536.03 178.70 L535.12 182.30 L379.38 182.30 Z" fill="url(#a23)"/>
<path d="M379.54 181.70 L535.28 181.70 L534.38 185.30 L378.57 185.30 Z" fill="url(#a24)"/>
<path d="M378.73 184.70 L534.53 184.70 L533.62 188.30 L377.76 188.30 Z" fill="url(#a25)"/>
<path d="M377.92 187.70 L533.78 187.70 L532.82 191.30 L376.95 191.30 Z" fill="url(#a26)"/>
<path d="M377.11 190.70 L533.00 190.70 L531.95 194.30 L376.14 194.30 Z" fill="url(#a27)"/>
<path d="M376.30 193.70 L532.13 193.70 L531.08 197.30 L375.33 197.30 Z" fill="url(#a28)"/>
<path d="M375.49 196.70 L531.26 196.70 L530.21 200.30 L374.52 200.30 Z" fill="url(#a29)"/>
<path d="M374.68 199.70 L530.39 199.70 L529.34 203.30 L373.71 203.30 Z" fill="url(#a30)"/>
<path d="M373.87 202.70 L529.52 202.70 L528.47 206.30 L372.90 206.30 Z" fill="url(#a31)"/>
<path d="M373.06 205.70 L528.65 205.70 L527.60 209.30 L372.09 209.30 Z" fill="url(#a32)"/>
<path d="M372.25 208.70 L527.78 208.70 L526.73 212.30 L371.28 212.30 Z" fill="url(#a33)"/>
<path d="M371.44 211.70 L526.91 211.70 L525.86 215.30 L370.47 215.30 Z" fill="url(#a34)"/>
<path d="M370.63 214.70 L526.04 214.70 L524.99 218.30 L369.66 218.30 Z" fill="url(#a35)"/>
<path d="M369.82 217.70 L525.17 217.70 L524.12 221.30 L368.61 221.30 Z" fill="url(#a36)"/>
<path d="M368.88 220.70 L524.30 220.70 L523.25 224.30 L367.23 224.30 Z" fill="url(#a37)"/>
<path d="M367.51 223.70 L523.43 223.70 L522.38 227.30 L365.90 227.30 Z" fill="url(#a38)"/>
<path d="M366.14 226.70 L522.56 226.70 L521.48 230.30 L364.90 230.30 Z" fill="url(#a39)"/>
<path d="M365.10 229.70 L521.69 229.70 L520.28 233.30 L363.90 233.30 Z" fill="url(#a40)"/>
<path d="M364.10 232.70 L520.52 232.70 L519.08 236.30 L362.90 236.30 Z" fill="url(#a41)"/>
<path d="M363.10 235.70 L519.32 235.70 L517.88 239.30 L361.90 239.30 Z" fill="url(#a42)"/>
<path d="M362.10 238.70 L518.12 238.70 L516.77 242.30 L360.90 242.30 Z" fill="url(#a43)"/>
<path d="M361.10 241.70 L516.99 241.70 L515.69 245.30 L359.90 245.30 Z" fill="url(#a44)"/>
<path d="M360.10 244.70 L515.91 244.70 L514.61 248.30 L358.94 248.30 Z" fill="url(#a45)"/>
<path d="M359.14 247.70 L514.83 247.70 L513.53 251.30 L357.98 251.30 Z" fill="url(#a46)"/>
<path d="M358.18 250.70 L513.75 250.70 L512.45 254.30 L357.02 254.30 Z" fill="url(#a47)"/>
<path d="M357.22 253.70 L512.67 253.70 L511.37 257.30 L356.06 257.30 Z" fill="url(#a48)"/>
<path d="M356.26 256.70 L511.59 256.70 L510.22 260.30 L355.10 260.30 Z" fill="url(#a49)"/>
<path d="M355.30 259.70 L510.51 259.70 L508.42 263.30 L354.14 263.30 Z" fill="url(#a50)"/>
<path d="M354.34 262.70 L508.78 262.70 L506.62 266.30 L353.18 266.30 Z" fill="url(#a51)"/>
<path d="M353.38 265.70 L506.98 265.70 L504.82 269.30 L352.22 269.30 Z" fill="url(#a52)"/>
<path d="M352.42 268.70 L505.18 268.70 L503.48 272.30 L351.46 272.30 Z" fill="url(#a53)"/>
<path d="M351.60 271.70 L503.72 271.70 L502.28 275.30 L350.76 275.30 Z" fill="url(#a54)"/>
<path d="M350.90 274.70 L502.52 274.70 L501.08 278.30 L350.06 278.30 Z" fill="url(#a55)"/>
<path d="M350.20 277.70 L501.32 277.70 L499.51 281.30 L349.36 281.30 Z" fill="url(#a56)"/>
<path d="M349.50 280.70 L499.92 280.70 L497.45 284.30 L348.66 284.30 Z" fill="url(#a57)"/>
<path d="M348.80 283.70 L497.86 283.70 L495.37 287.30 L347.96 287.30 Z" fill="url(#a58)"/>
<path d="M348.10 286.70 L495.81 286.70 L493.09 290.30 L347.26 290.30 Z" fill="url(#a59)"/>
<path d="M347.40 289.70 L493.55 289.70 L490.81 293.30 L346.56 293.30 Z" fill="url(#a60)"/>
<path d="M346.70 292.70 L491.27 292.70 L488.53 296.30 L345.86 296.30 Z" fill="url(#a61)"/>
<path d="M346.00 295.70 L488.99 295.70 L486.47 299.30 L345.16 299.30 Z" fill="url(#a62)"/>
<path d="M345.30 298.70 L486.87 298.70 L484.47 302.30 L344.65 302.30 Z" fill="url(#a63)"/>
<path d="M344.75 301.70 L484.87 301.70 L482.47 305.30 L344.20 305.30 Z" fill="url(#a64)"/>
<path d="M344.30 304.70 L482.87 304.70 L480.47 308.30 L343.75 308.30 Z" fill="url(#a65)"/>
<path d="M343.85 307.70 L480.87 307.70 L478.47 311.30 L343.31 311.30 Z" fill="url(#a66)"/>
<path d="M343.39 310.70 L478.87 310.70 L475.70 314.30 L342.86 314.30 Z" fill="url(#a67)"/>
<path d="M342.94 313.70 L476.30 313.70 L472.70 317.30 L342.40 317.30 Z" fill="url(#a68)"/>
<path d="M342.50 316.70 L473.30 316.70 L470.00 320.30 L342.00 320.30 Z" fill="url(#a69)"/>
<path d="M395.80 111.00 L387.80 150.00 L380.00 180.00 L369.20 220.00 L366.00 227.00" stroke="#1c1c1c" stroke-width="1" fill="none"/>
<path d="M551.20 111.00 L543.20 150.00 L533.20 190.00 L521.60 230.00 L517.60 240.00 L510.40 260.00 L504.40 270.00 L500.40 280.00 L495.60 287.00" stroke="#1c1c1c" stroke-width="1" fill="none"/>
<path d="M441 286 L470 286 L483.6 319.6 L484.8 345 L482 396 L441 398 Z" fill="#363636"/>
<path d="M317.8 300.6 L317.5 353 L420.1 344.8 L420.5 305 Z" fill="#363636"/>
<path d="M317.5 353 L420.1 344.8" stroke="#1c1c1c" stroke-width="0.8" fill="none"/>
<path d="M297.20 300.00 C297.47 297.50 297.83 289.67 298.80 285.00 C299.77 280.33 301.63 275.67 303.00 272.00 C304.37 268.33 305.33 265.83 307.00 263.00 C308.67 260.17 310.83 257.50 313.00 255.00 C315.17 252.50 317.17 250.50 320.00 248.00 C322.83 245.50 326.67 242.27 330.00 240.00 C333.33 237.73 336.33 236.00 340.00 234.40 C343.67 232.80 348.00 231.33 352.00 230.40 C356.00 229.47 360.00 228.93 364.00 228.80 C368.00 228.67 372.00 229.07 376.00 229.60 C380.00 230.13 384.00 230.85 388.00 232.00 C392.00 233.15 396.33 234.83 400.00 236.50 C403.67 238.17 406.67 239.75 410.00 242.00 C413.33 244.25 417.17 247.33 420.00 250.00 C422.83 252.67 425.17 255.50 427.00 258.00 C428.83 260.50 429.50 262.17 431.00 265.00 C432.50 267.83 434.58 271.67 436.00 275.00 C437.42 278.33 438.67 281.67 439.50 285.00 C440.33 288.33 440.67 291.67 441.00 295.00 C441.33 298.33 441.42 303.33 441.50 305.00 L441.2 413 L419.2 412.6 L420.5 305 L317.8 300.6 L317.5 353 L296 352.5 Z" fill="#d3d3d3"/>
<path d="M297.20 300.00 C297.47 297.50 297.83 289.67 298.80 285.00 C299.77 280.33 301.63 275.67 303.00 272.00 C304.37 268.33 305.33 265.83 307.00 263.00 C308.67 260.17 310.83 257.50 313.00 255.00 C315.17 252.50 317.17 250.50 320.00 248.00 C322.83 245.50 326.67 242.27 330.00 240.00 C333.33 237.73 336.33 236.00 340.00 234.40 C343.67 232.80 348.00 231.33 352.00 230.40 C356.00 229.47 360.00 228.93 364.00 228.80 C368.00 228.67 372.00 229.07 376.00 229.60 C380.00 230.13 384.00 230.85 388.00 232.00 C392.00 233.15 396.33 234.83 400.00 236.50 C403.67 238.17 406.67 239.75 410.00 242.00 C413.33 244.25 417.17 247.33 420.00 250.00 C422.83 252.67 425.17 255.50 427.00 258.00 C428.83 260.50 429.50 262.17 431.00 265.00 C432.50 267.83 434.58 271.67 436.00 275.00 C437.42 278.33 438.67 281.67 439.50 285.00 C440.33 288.33 440.67 291.67 441.00 295.00 C441.33 298.33 441.42 303.33 441.50 305.00 L317.8 300.6 Z" fill="#d3d3d3"/>
<ellipse cx="369.3" cy="302" rx="51.4" ry="52.8" fill="#d3d3d3"/>
<ellipse cx="368.8" cy="302.5" rx="37.6" ry="39.2" fill="#2d2d2d"/>
<g clip-path="url(#holeclip)">
<path d="M381.6 266.5 L374.4 283.6 L410 284.2 L410 260 Z" fill="#5f5f82"/>
<path d="M382 316.5 L410 316.5 L410 340 Z" fill="#707092"/>
<path d="M357 279 C352.5 277.5 353 271 358.5 268 C365 265 374 264.6 381.5 265 L377.5 271.2 C370 274.5 363 279.5 357 279 Z" fill="#3a3a3a" stroke="#1c1c1c" stroke-width="0.8"/>
<g transform="rotate(1.3 339 299)">
<path d="M346 283.3 L412 283.3 L412 315.5 L346 315.5 C341.5 313 339.2 306 339.2 299.4 C339.2 292 341.5 286 346 283.3 Z" fill="url(#cylg)"/>
<path d="M412 283.3 L346 283.3 C341.5 286 339.2 292 339.2 299.4 C339.2 306 341.5 313 346 315.5 L412 315.5" stroke="#1c1c1c" stroke-width="0.9" fill="none"/>
</g>
<path d="M331 300.6 L339.2 299.6" stroke="#1c1c1c" stroke-width="0.8"/>
</g>
<ellipse cx="368.8" cy="302.5" rx="37.6" ry="39.2" stroke="#1c1c1c" stroke-width="0.9" fill="none"/>
<ellipse cx="369.3" cy="302" rx="51.4" ry="52.8" stroke="#1c1c1c" stroke-width="0.8" fill="none"/>
<path d="M297.20 300.00 C297.47 297.50 297.83 289.67 298.80 285.00 C299.77 280.33 301.63 275.67 303.00 272.00 C304.37 268.33 305.33 265.83 307.00 263.00 C308.67 260.17 310.83 257.50 313.00 255.00 C315.17 252.50 317.17 250.50 320.00 248.00 C322.83 245.50 326.67 242.27 330.00 240.00 C333.33 237.73 336.33 236.00 340.00 234.40 C343.67 232.80 348.00 231.33 352.00 230.40 C356.00 229.47 360.00 228.93 364.00 228.80 C368.00 228.67 372.00 229.07 376.00 229.60 C380.00 230.13 384.00 230.85 388.00 232.00 C392.00 233.15 396.33 234.83 400.00 236.50 C403.67 238.17 406.67 239.75 410.00 242.00 C413.33 244.25 417.17 247.33 420.00 250.00 C422.83 252.67 425.17 255.50 427.00 258.00 C428.83 260.50 429.50 262.17 431.00 265.00 C432.50 267.83 434.58 271.67 436.00 275.00 C437.42 278.33 438.67 281.67 439.50 285.00 C440.33 288.33 440.67 291.67 441.00 295.00 C441.33 298.33 441.42 303.33 441.50 305.00 L441.2 413 L419.2 412.6 L420.5 305" stroke="#1c1c1c" stroke-width="0.9" fill="none"/>
<path d="M297.2 300 L296 352.5 L317.5 353 L317.8 300.6 L297.2 300" stroke="#1c1c1c" stroke-width="0.8" fill="none"/>
<path d="M420.5 305 L441.5 305 L449 303.5" stroke="#1c1c1c" stroke-width="0.8" fill="none"/>
<path d="M441 413 L457 409.2 L441 408 Z" fill="#333"/>
<path d="M445.5 286.8 L506 288.2 L506 320.2 L453.6 318.6 C451 317 450 314 449.8 311 L449 303 Z" fill="url(#cylg)"/>
<path d="M445.5 286.8 L506 288.2 M453.6 318.6 L506 320.2 M445.5 286.8 L449 303 L449.8 311 C450 314 451 317 453.6 318.6" stroke="#1c1c1c" stroke-width="0.9" fill="none"/>
<ellipse cx="506" cy="304.2" rx="3.4" ry="16" fill="#3a3a3a" stroke="#1c1c1c" stroke-width="0.9"/>
<path d="M507.6 290 C510 296 510 313 507.6 319" stroke="#777" stroke-width="0.9" fill="none"/>
<path d="M441 396 L480 397.2 L520 399 L560 400.2 L600 402 L668.4 404 L668.4 416.6 L441 408 Z" fill="#1c1c1c"/>
<path d="M445 400 L469.6 392.4 L469.6 397.3 L452 402.5 Z" fill="#2e2e2e" stroke="#3c3c3c" stroke-width="0.5"/>
<path d="M441 399 L445.1 399 L445.1 403.2 L476 404.6 L570 407.4 L668.4 410.6 L668.4 416.6 L570 411.8 L476 408.5 L441 407.4 Z" fill="#d3d3d3"/>
<path d="M441 407.4 L476 408.5 L570 411.8 L668.4 416.6" stroke="#1c1c1c" stroke-width="0.8" fill="none"/>
<path d="M469.60 327.60 C471.93 327.07 479.37 325.22 483.60 324.40 C487.83 323.58 490.43 323.00 495.00 322.70 C499.57 322.40 505.67 322.48 511.00 322.60 C516.33 322.72 522.73 323.00 527.00 323.40 C531.27 323.80 533.60 324.40 536.60 325.00 C539.60 325.60 542.77 326.45 545.00 327.00 C547.23 327.55 548.17 327.68 550.00 328.30 C551.83 328.92 554.00 329.65 556.00 330.70 C558.00 331.75 560.00 333.05 562.00 334.60 C564.00 336.15 566.00 338.20 568.00 340.00 C570.00 341.80 572.00 343.50 574.00 345.40 C576.00 347.30 577.33 348.63 580.00 351.40 C582.67 354.17 587.33 359.07 590.00 362.00 C592.67 364.93 593.80 366.53 596.00 369.00 C598.20 371.47 600.80 374.30 603.20 376.80 C605.60 379.30 608.20 382.20 610.40 384.00 C612.60 385.80 614.13 386.52 616.40 387.60 C618.67 388.68 620.07 389.67 624.00 390.50 C627.93 391.33 632.53 392.18 640.00 392.60 C647.47 393.02 659.87 392.67 668.80 393.00 C677.73 393.33 689.47 394.33 693.60 394.60 L692.8 410.6 L668.4 416.6 L668.4 401 L668.40 401.00 L640.00 399.80 L610.00 397.80 L602.00 397.00 L594.00 394.20 L586.00 389.40 L578.00 383.00 L570.00 373.00 L560.00 362.60 L552.00 354.60 L545.00 346.60 L539.00 342.40 L533.00 338.50 L527.00 334.90 L521.00 332.50 L515.00 331.00 L511.00 329.90 L495.00 329.40 L469.60 328.80 Z" fill="url(#topf)"/>
<path d="M469.60 327.60 C471.93 327.07 479.37 325.22 483.60 324.40 C487.83 323.58 490.43 323.00 495.00 322.70 C499.57 322.40 505.67 322.48 511.00 322.60 C516.33 322.72 522.73 323.00 527.00 323.40 C531.27 323.80 533.60 324.40 536.60 325.00 C539.60 325.60 542.77 326.45 545.00 327.00 C547.23 327.55 548.17 327.68 550.00 328.30 C551.83 328.92 554.00 329.65 556.00 330.70 C558.00 331.75 560.00 333.05 562.00 334.60 C564.00 336.15 566.00 338.20 568.00 340.00 C570.00 341.80 572.00 343.50 574.00 345.40 C576.00 347.30 577.33 348.63 580.00 351.40 C582.67 354.17 587.33 359.07 590.00 362.00 C592.67 364.93 593.80 366.53 596.00 369.00 C598.20 371.47 600.80 374.30 603.20 376.80 C605.60 379.30 608.20 382.20 610.40 384.00 C612.60 385.80 614.13 386.52 616.40 387.60 C618.67 388.68 620.07 389.67 624.00 390.50 C627.93 391.33 632.53 392.18 640.00 392.60 C647.47 393.02 659.87 392.67 668.80 393.00 C677.73 393.33 689.47 394.33 693.60 394.60" stroke="#1c1c1c" stroke-width="0.9" fill="none"/>
<path d="M469.60 328.80 C473.83 328.90 488.10 329.22 495.00 329.40 C501.90 329.58 507.67 329.63 511.00 329.90 C514.33 330.17 513.33 330.57 515.00 331.00 C516.67 331.43 519.00 331.85 521.00 332.50 C523.00 333.15 525.00 333.90 527.00 334.90 C529.00 335.90 531.00 337.25 533.00 338.50 C535.00 339.75 537.00 341.05 539.00 342.40 C541.00 343.75 542.83 344.57 545.00 346.60 C547.17 348.63 549.50 351.93 552.00 354.60 C554.50 357.27 557.00 359.53 560.00 362.60 C563.00 365.67 567.00 369.60 570.00 373.00 C573.00 376.40 575.33 380.27 578.00 383.00 C580.67 385.73 583.33 387.53 586.00 389.40 C588.67 391.27 591.33 392.93 594.00 394.20 C596.67 395.47 599.33 396.40 602.00 397.00 C604.67 397.60 603.67 397.33 610.00 397.80 C616.33 398.27 630.27 399.27 640.00 399.80 C649.73 400.33 663.67 400.80 668.40 401.00 L668.4 410.6 C663.67 410.53 649.73 410.67 640.00 410.20 C630.27 409.73 616.33 408.47 610.00 407.80 C603.67 407.13 604.67 406.87 602.00 406.20 C599.33 405.53 596.67 404.73 594.00 403.80 C591.33 402.87 588.67 401.93 586.00 400.60 C583.33 399.27 580.67 397.87 578.00 395.80 C575.33 393.73 573.00 391.23 570.00 388.20 C567.00 385.17 563.67 381.60 560.00 377.60 C556.33 373.60 551.33 367.88 548.00 364.20 C544.67 360.52 542.50 358.03 540.00 355.50 C537.50 352.97 535.17 350.68 533.00 349.00 C530.83 347.32 529.00 346.45 527.00 345.40 C525.00 344.35 523.00 343.40 521.00 342.70 C519.00 342.00 516.67 341.68 515.00 341.20 C513.33 340.72 514.33 340.13 511.00 339.80 C507.67 339.47 501.90 339.30 495.00 339.20 C488.10 339.10 473.83 339.20 469.60 339.20 Z" fill="#d3d3d3"/>
<path d="M469.60 328.80 C473.83 328.90 488.10 329.22 495.00 329.40 C501.90 329.58 507.67 329.63 511.00 329.90 C514.33 330.17 513.33 330.57 515.00 331.00 C516.67 331.43 519.00 331.85 521.00 332.50 C523.00 333.15 525.00 333.90 527.00 334.90 C529.00 335.90 531.00 337.25 533.00 338.50 C535.00 339.75 537.00 341.05 539.00 342.40 C541.00 343.75 542.83 344.57 545.00 346.60 C547.17 348.63 549.50 351.93 552.00 354.60 C554.50 357.27 557.00 359.53 560.00 362.60 C563.00 365.67 567.00 369.60 570.00 373.00 C573.00 376.40 575.33 380.27 578.00 383.00 C580.67 385.73 583.33 387.53 586.00 389.40 C588.67 391.27 591.33 392.93 594.00 394.20 C596.67 395.47 599.33 396.40 602.00 397.00 C604.67 397.60 603.67 397.33 610.00 397.80 C616.33 398.27 630.27 399.27 640.00 399.80 C649.73 400.33 663.67 400.80 668.40 401.00" stroke="#1c1c1c" stroke-width="0.8" fill="none"/>
<path d="M469.60 339.20 C473.83 339.20 488.10 339.10 495.00 339.20 C501.90 339.30 507.67 339.47 511.00 339.80 C514.33 340.13 513.33 340.72 515.00 341.20 C516.67 341.68 519.00 342.00 521.00 342.70 C523.00 343.40 525.00 344.35 527.00 345.40 C529.00 346.45 530.83 347.32 533.00 349.00 C535.17 350.68 537.50 352.97 540.00 355.50 C542.50 358.03 544.67 360.52 548.00 364.20 C551.33 367.88 556.33 373.60 560.00 377.60 C563.67 381.60 567.00 385.17 570.00 388.20 C573.00 391.23 575.33 393.73 578.00 395.80 C580.67 397.87 583.33 399.27 586.00 400.60 C588.67 401.93 591.33 402.87 594.00 403.80 C596.67 404.73 599.33 405.53 602.00 406.20 C604.67 406.87 603.67 407.13 610.00 407.80 C616.33 408.47 630.27 409.73 640.00 410.20 C649.73 410.67 663.67 410.53 668.40 410.60" stroke="#1c1c1c" stroke-width="0.9" fill="none"/>
<path d="M469.6 327.6 L469.6 339.2" stroke="#1c1c1c" stroke-width="0.8"/>
<path d="M546 347 L569 341 M585.2 388.2 L607.6 382.6 M668.8 410.2 L692.8 405.4" stroke="#1c1c1c" stroke-width="0.8" fill="none"/>
<path d="M668.4 401 L693.6 394.6 L692.8 410.6 L668.4 416.6 Z" fill="#333" stroke="#1c1c1c" stroke-width="0.8"/>
<path d="M668.8 410.2 L692.8 405.4" stroke="#1c1c1c" stroke-width="0.9"/>
<rect x="487.7" y="342.7" width="17.9" height="8.5" rx="2" fill="#222"/>
<path d="M477 351 L480 348.9 L512 348.9 L515.1 351 L515.1 369.6 L477 369.6 Z" fill="#262626" stroke="#161616" stroke-width="0.6"/>
<path d="M477 354.5 L515.1 354.5 M504.5 354.5 V369.6" stroke="#181818" stroke-width="0.6"/>
<rect x="488.2" y="350.4" width="6.8" height="1.3" fill="#aaa"/>
<rect x="479.8" y="369.6" width="5.1" height="17.9" fill="url(#pin)" stroke="#444" stroke-width="0.4"/>
<rect x="506.2" y="369.6" width="5.6" height="19" fill="url(#pin)" stroke="#444" stroke-width="0.4"/>
<path d="M778 114.8 L784 120.8 L772.7 120.8 Z" fill="#e2e3ec"/>
<path d="M764.9 121.4 C756 124 750 128 745.5 133.5" stroke="#e2e3ec" stroke-width="3.4" fill="none"/><path d="M742 130 L743 136.5 L749.5 136 Z" fill="#e2e3ec"/>
<path d="M791.5 121.4 C800 124 806 128 810.5 133.5" stroke="#e2e3ec" stroke-width="3.4" fill="none"/><path d="M814 130 L813 136.5 L806.5 136 Z" fill="#e2e3ec"/>
<path d="M730.5 163.5 L735.6 158.4 L735.6 169 Z" fill="#e2e3ec"/>
<path d="M827.3 163.5 L821 158.4 L821 169 Z" fill="#e2e3ec"/>
<path d="M772.7 206.7 L784 206.7 L778.3 212.3 Z" fill="#e2e3ec"/>
<path d="M759 140.6 L791 140.4 Q798.4 140.4 798.4 148 L797.8 182 Q797.4 189.6 789.5 189.6 L759.5 188.8 Q751 188.4 751 180 L751 148.5 Q751 140.6 759 140.6 Z" fill="#e8eaf1" stroke="#cfd2dc" stroke-width="0.6"/>
<path d="M757.5 145.8 L792 145.8 L792 180.6 L757.5 180.6 Z" fill="#f4f6fb"/>
<path d="M757.5 145.8 L792 145.8 M757.5 180.6 L792 180.6" stroke="#c4c8d4" stroke-width="0.6"/>
<path d="M753 143 L764.8 146.4 M753.5 186 L764.8 177.6" stroke="#9094a6" stroke-width="0.6"/><path d="M766.6 152 V172" stroke="#b4b8c6" stroke-width="0.6"/>
<text x="0" y="0" transform="translate(792 160.6) rotate(180) scale(0.88 1)" font-family="Liberation Sans" font-size="12.8px" fill="#2a2a2a">Bottom</text>
<path d="M749.8 187.2 L796.6 191.4" stroke="#e02040" stroke-width="1"/><path d="M796.6 191.4 L797.8 139.8" stroke="#20e020" stroke-width="0.9"/><path d="M796.6 191.4 L797.2 178" stroke="#2040f0" stroke-width="1"/>
<path d="M748 185.6 L752 189.6 M752 185.6 L748 189.6" stroke="#e02040" stroke-width="0.9"/>
<path d="M801.5 177.2 H805 L801.5 181.6 H805" stroke="#2040f0" stroke-width="0.9" fill="none"/>
<path d="M802.8 131.5 L804.6 134 L806.4 131.5 M804.6 134 V136.6" stroke="#20e020" stroke-width="0.9" fill="none"/>
<path d="M795 197 L802 194 L809.8 196 V206 L802 208 L795 205.5 Z" fill="#d8d8d8"/><path d="M795 197 L802 194 L809.8 196 L803 198.5 Z" fill="#f4f4f4"/><path d="M803 198.5 L809.8 196 V206 L803 208 Z" fill="#c0c0c0"/>
<path d="M813.3 199 L821 199 L817.2 203.2 Z" fill="#333"/>
<path d="M804 441.4 H815.6" stroke="#b02424" stroke-width="1.4"/><path d="M815 430 V441.4" stroke="#3c9c3c" stroke-width="1.4"/><rect x="814.5" y="440.5" width="2" height="2" fill="#2020c0"/>
<text x="806" y="440.5" font-family="Liberation Sans" font-size="5.5px" fill="#444">X</text>
<text x="817.5" y="429.5" font-family="Liberation Sans" font-size="5.5px" fill="#444">Y</text>
<text x="819" y="441.5" font-family="Liberation Sans" font-size="5.5px" fill="#444">Z</text>
</svg></body></html>
